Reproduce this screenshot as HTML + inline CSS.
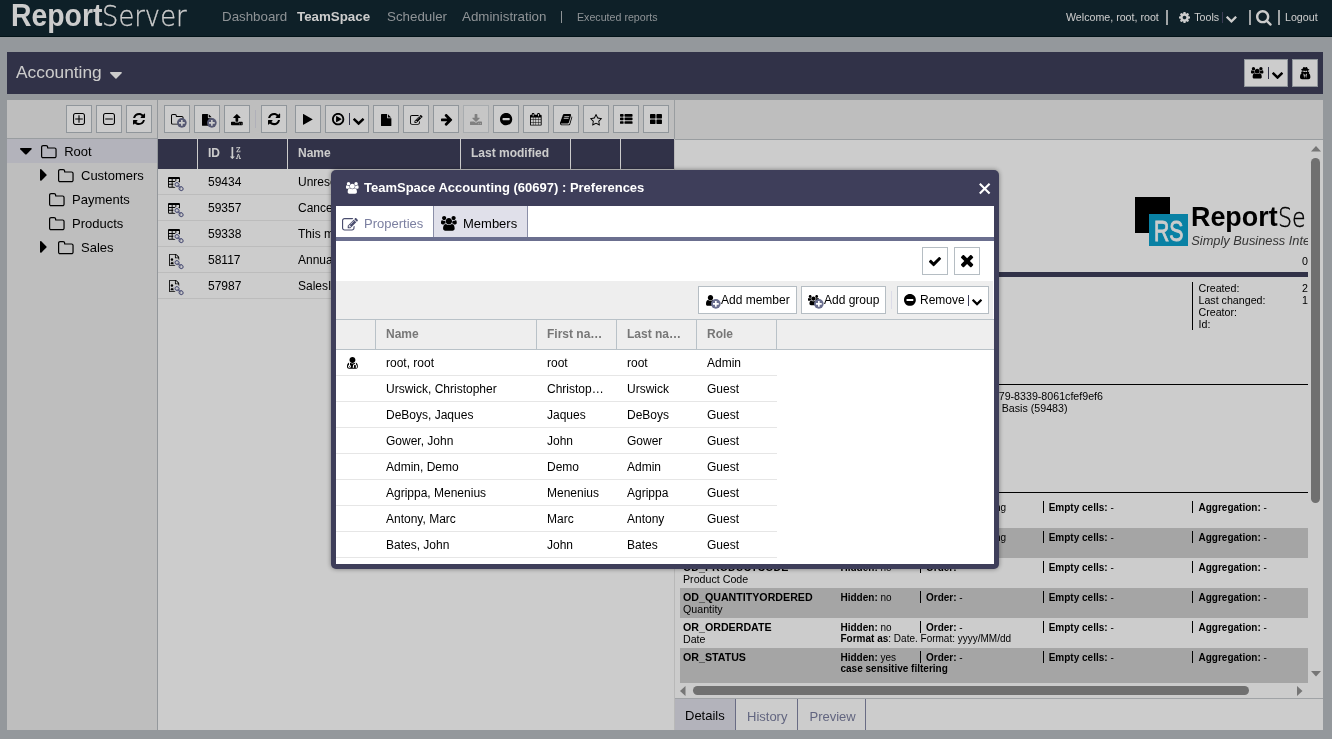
<!DOCTYPE html>
<html lang="en"><head><meta charset="utf-8"><title>ReportServer - TeamSpace</title>
<style>
html,body{margin:0;padding:0}
body{width:1332px;height:739px;overflow:hidden;position:relative;background:#babfc3;font-family:"Liberation Sans",Arial,Helvetica,sans-serif;color:#000}
.b,.t,.i,.c{position:absolute}
.t{white-space:nowrap;display:block}
.i{display:block;overflow:visible}
.c{overflow:hidden}
b,.bd{font-weight:bold}
</style></head><body>
<div id="app" style="position:absolute;left:0;top:0;width:1332px;height:739px;will-change:transform">
<div class="b" id="hdr" style="left:0;top:0;width:1332px;height:36px;background:#122832;border-bottom:1px solid #04181f"></div>
<span class="t" id="logo1" style="left:10.5px;top:-4.5px;font-size:31px;line-height:40px;font-weight:bold;color:#fff;transform-origin:0 50%;transform:scaleX(.915)">Report</span>
<span class="t" id="logo2" style="left:101.5px;top:-4.5px;font-size:29px;line-height:40px;font-weight:200;font-family:'DejaVu Sans Light','DejaVu Sans','Liberation Sans',sans-serif;color:#fff;-webkit-text-stroke:.3px #fff;transform-origin:0 50%;transform:scaleX(.89)">Server</span>
<span class="t " style="left:222.00px;top:6.50px;font-size:13.333px;line-height:20px;color:#b2b8bc">Dashboard</span>
<span class="t " style="left:297.00px;top:6.50px;font-size:13.333px;line-height:20px;color:#fff;font-weight:bold">TeamSpace</span>
<span class="t " style="left:387.00px;top:6.50px;font-size:13.333px;line-height:20px;color:#b2b8bc">Scheduler</span>
<span class="t " style="left:462.00px;top:6.50px;font-size:13.333px;line-height:20px;color:#b2b8bc">Administration</span>
<div class="b" style="left:561.00px;top:11.00px;width:1.00px;height:12.00px;background:#b2b8bc"></div>
<span class="t " style="left:577.00px;top:9.00px;font-size:10.667px;line-height:16px;color:#b2b8bc">Executed reports</span>
<span class="t " style="left:1066.00px;top:9.00px;font-size:10.667px;line-height:16px;color:#fff">Welcome, root, root</span>
<div class="b" style="left:1165.50px;top:10.00px;width:2.00px;height:14.50px;background:#c8cdd0"></div>
<div class="b" style="left:1249.00px;top:10.00px;width:2.00px;height:14.50px;background:#c8cdd0"></div>
<div class="b" style="left:1278.00px;top:10.00px;width:2.00px;height:14.50px;background:#c8cdd0"></div>
<svg class="i" style="left:1178.80px;top:12.00px;width:11.00px;height:11.00px;" viewBox="0 128 1536 1536"><path fill="#fff" stroke="#fff" stroke-width="0" d="M1024 896C1024 1037 909 1152 768 1152C627 1152 512 1037 512 896C512 755 627 640 768 640C909 640 1024 755 1024 896ZM1536 787C1536 770 1524 754 1507 751L1324 723C1314 690 1300 657 1283 625C1317 578 1354 534 1388 488C1393 481 1396 474 1396 465C1396 457 1394 449 1389 443C1347 384 1277 322 1224 273C1217 267 1208 263 1199 263C1190 263 1181 266 1175 272L1033 379C1004 364 974 352 943 342L915 158C913 141 897 128 879 128H657C639 128 625 140 621 156C605 216 599 281 592 342C561 352 530 365 501 380L363 273C355 267 346 263 337 263C303 263 168 409 144 442C139 449 135 456 135 465C135 474 139 482 145 489C182 534 218 579 252 627C236 657 223 687 213 719L27 747C12 750 0 768 0 783V1005C0 1022 12 1038 29 1041L212 1068C222 1102 236 1135 253 1167C219 1214 182 1258 148 1304C143 1311 140 1318 140 1327C140 1335 142 1343 147 1350C189 1408 259 1470 312 1518C319 1525 328 1529 337 1529C346 1529 355 1526 362 1520L503 1413C532 1428 562 1440 593 1450L621 1634C623 1651 639 1664 657 1664H879C897 1664 911 1652 915 1636C931 1576 937 1511 944 1450C975 1440 1006 1427 1035 1412L1173 1520C1181 1525 1190 1529 1199 1529C1233 1529 1368 1382 1392 1350C1398 1343 1401 1336 1401 1327C1401 1318 1397 1309 1391 1302C1354 1257 1318 1213 1284 1164C1300 1135 1312 1105 1323 1073L1508 1045C1524 1042 1536 1024 1536 1009Z"/></svg>
<span class="t " style="left:1194.30px;top:9.00px;font-size:10.667px;line-height:16px;color:#fff">Tools</span>
<div class="b" style="left:1222.00px;top:11.50px;width:1.00px;height:11.50px;background:#4a4a6a"></div>
<svg class="i" style="left:1226.06px;top:15.76px;width:10.87px;height:6.98px;" viewBox="90 533 1612 1034"><path fill="#fff" stroke="#fff" stroke-width="0" d="M1683 808C1708 783 1708 742 1683 717L1517 552C1492 527 1452 527 1427 552L896 1083L365 552C340 527 300 527 275 552L109 717C84 742 84 783 109 808L851 1549C876 1574 916 1574 941 1549L1683 808Z"/></svg>
<svg class="i" style="left:1256.10px;top:9.90px;width:15.80px;height:15.80px;" viewBox="0 128 1664 1664"><path fill="#fff" stroke="#fff" stroke-width="0" d="M1152 832C1152 1079 951 1280 704 1280C457 1280 256 1079 256 832C256 585 457 384 704 384C951 384 1152 585 1152 832ZM1664 1664C1664 1630 1650 1597 1627 1574L1284 1231C1365 1114 1408 974 1408 832C1408 443 1093 128 704 128C315 128 0 443 0 832C0 1221 315 1536 704 1536C846 1536 986 1493 1103 1412L1446 1754C1469 1778 1502 1792 1536 1792C1606 1792 1664 1734 1664 1664Z"/></svg>
<span class="t " style="left:1285.00px;top:9.00px;font-size:10.667px;line-height:16px;color:#fff">Logout</span>
<div class="b" style="left:7.00px;top:52.00px;width:1316.00px;height:42.00px;background:#3e3f5a"></div>
<span class="t " style="left:16.00px;top:59.00px;font-size:17.333px;line-height:26px;color:#fff">Accounting</span>
<svg class="i" style="left:109.90px;top:72.30px;width:11.91px;height:6.70px;" viewBox="0 640 1024 576"><path fill="#fff" stroke="#fff" stroke-width="0" d="M1024 704C1024 669 995 640 960 640H64C29 640 0 669 0 704C0 721 7 737 19 749L467 1197C479 1209 495 1216 512 1216C529 1216 545 1209 557 1197L1005 749C1017 737 1024 721 1024 704Z"/></svg>
<div class="b" style="left:1244.00px;top:59.00px;width:44.00px;height:28.00px;background:#fff;border:1px solid #b5bcc2;box-sizing:border-box"></div>
<div class="b" style="left:1292.00px;top:59.00px;width:26.00px;height:28.00px;background:#fff;border:1px solid #b5bcc2;box-sizing:border-box"></div>
<svg class="i" style="left:1251.04px;top:67.46px;width:12.41px;height:11.58px;" viewBox="0 0 1920 1792"><path fill="#000" stroke="#000" stroke-width="0" d="M593 896C541 821 512 731 512 640C512 618 514 596 517 574C474 589 430 597 384 597C249 597 145 512 124 512C-3 512 0 784 0 865C0 976 94 1024 194 1024H328C395 944 489 899 593 896ZM1664 1533C1664 1307 1611 960 1318 960C1284 960 1160 1099 960 1099C760 1099 636 960 602 960C309 960 256 1307 256 1533C256 1695 363 1792 523 1792H1397C1557 1792 1664 1695 1664 1533ZM640 256C640 115 525 0 384 0C243 0 128 115 128 256C128 397 243 512 384 512C525 512 640 397 640 256ZM1344 640C1344 428 1172 256 960 256C748 256 576 428 576 640C576 852 748 1024 960 1024C1172 1024 1344 852 1344 640ZM1920 865C1920 784 1923 512 1796 512C1775 512 1671 597 1536 597C1490 597 1446 589 1403 574C1406 596 1408 618 1408 640C1408 731 1379 821 1327 896C1431 899 1525 944 1592 1024H1726C1826 1024 1920 976 1920 865ZM1792 256C1792 115 1677 0 1536 0C1395 0 1280 115 1280 256C1280 397 1395 512 1536 512C1677 512 1792 397 1792 256Z"/></svg>
<div class="b" style="left:1268.00px;top:67.00px;width:1.00px;height:12.00px;background:#3e3f5a"></div>
<svg class="i" style="left:1271.86px;top:71.79px;width:11.09px;height:7.12px;" viewBox="90 533 1612 1034"><path fill="#000" stroke="#000" stroke-width="0" d="M1683 808C1708 783 1708 742 1683 717L1517 552C1492 527 1452 527 1427 552L896 1083L365 552C340 527 300 527 275 552L109 717C84 742 84 783 109 808L851 1549C876 1574 916 1574 941 1549L1683 808Z"/></svg>
<svg class="i" style="left:1299.92px;top:67.18px;width:10.36px;height:12.25px;" viewBox="0 0 1408 1664"><path fill="#000" stroke="#000" stroke-width="0" d="M576 1536 448 896 576 960 672 1088ZM832 1536 736 1088 832 960 960 896ZM992 526C991 535 990 544 988 553C982 561 977 558 973 570C947 641 935 696 845 696C716 696 752 577 710 577H698C656 577 692 696 563 696C473 696 461 641 435 570C431 558 426 561 420 553C418 544 417 535 416 526C417 524 418 522 420 520C429 513 501 512 516 512C573 512 627 520 683 531C690 533 697 533 704 533C711 533 718 533 725 531C781 520 835 512 892 512C907 512 979 513 988 520C990 522 991 524 992 526ZM1408 1405C1408 1227 1377 958 1198 865L1280 640H1066C1084 588 1091 534 1086 480C1125 472 1280 440 1280 384C1280 325 1110 293 1070 285C1049 210 999 96 948 37C928 14 903 0 872 0C812 0 764 62 704 62C644 62 596 0 536 0C505 0 480 14 460 37C409 96 359 210 338 285C298 293 128 325 128 384C128 440 283 472 322 480C321 490 320 501 320 512C320 556 328 599 342 640H128L218 860C32 950 0 1224 0 1405C0 1568 107 1664 267 1664H1141C1301 1664 1408 1568 1408 1405Z"/></svg>
<div class="b" style="left:7.00px;top:100.00px;width:1316.00px;height:39.00px;background:#eeeeee"></div>
<div class="b" style="left:7.00px;top:138.00px;width:150.00px;height:1.00px;background:#c0c5c9"></div>
<div class="b" style="left:675.00px;top:139.00px;width:648.00px;height:1.00px;background:#c0c5c9"></div>
<div class="b" style="left:158.00px;top:138.00px;width:516.00px;height:1.00px;background:#f6f6f6"></div>
<div class="b" style="left:157.00px;top:100.00px;width:1.00px;height:630.00px;background:#babfc3"></div>
<div class="b" style="left:674.00px;top:100.00px;width:1.00px;height:39.00px;background:#c0c5c9"></div>
<div class="b" style="left:66.00px;top:105.00px;width:26.00px;height:28.00px;background:#fff;border:1px solid #b5bcc2;box-sizing:border-box"></div>
<div class="b" style="left:96.00px;top:105.00px;width:26.00px;height:28.00px;background:#fff;border:1px solid #b5bcc2;box-sizing:border-box"></div>
<div class="b" style="left:126.00px;top:105.00px;width:26.00px;height:28.00px;background:#fff;border:1px solid #b5bcc2;box-sizing:border-box"></div>
<svg class="i" style="left:73.00px;top:113.00px;width:12.00px;height:12.00px;" viewBox="0 128 1408 1408"><path fill="#000" stroke="#000" stroke-width="0" d="M1152 800C1152 782 1138 768 1120 768H768V416C768 398 754 384 736 384H672C654 384 640 398 640 416V768H288C270 768 256 782 256 800V864C256 882 270 896 288 896H640V1248C640 1266 654 1280 672 1280H736C754 1280 768 1266 768 1248V896H1120C1138 896 1152 882 1152 864ZM1280 1248C1280 1336 1208 1408 1120 1408H288C200 1408 128 1336 128 1248V416C128 328 200 256 288 256H1120C1208 256 1280 328 1280 416V1248ZM1408 416C1408 257 1279 128 1120 128H288C129 128 0 257 0 416V1248C0 1407 129 1536 288 1536H1120C1279 1536 1408 1407 1408 1248Z"/></svg>
<svg class="i" style="left:102.90px;top:113.00px;width:12.00px;height:12.00px;" viewBox="0 128 1408 1408"><path fill="#000" stroke="#000" stroke-width="0" d="M1152 800C1152 782 1138 768 1120 768H288C270 768 256 782 256 800V864C256 882 270 896 288 896H1120C1138 896 1152 882 1152 864ZM1280 1248C1280 1336 1208 1408 1120 1408H288C200 1408 128 1336 128 1248V416C128 328 200 256 288 256H1120C1208 256 1280 328 1280 416V1248ZM1408 416C1408 257 1279 128 1120 128H288C129 128 0 257 0 416V1248C0 1407 129 1536 288 1536H1120C1279 1536 1408 1407 1408 1248Z"/></svg>
<svg class="i" style="left:133.03px;top:113.08px;width:12.05px;height:12.05px;" viewBox="0 128 1536 1536"><path fill="#000" stroke="#000" stroke-width="0" d="M1511 1056C1511 1039 1497 1024 1479 1024H1287C1272 1024 1262 1033 1257 1047C1240 1087 1228 1125 1204 1164C1111 1316 946 1408 768 1408C639 1408 514 1358 420 1270L557 1133C569 1121 576 1105 576 1088C576 1053 547 1024 512 1024H64C29 1024 0 1053 0 1088V1536C0 1571 29 1600 64 1600C81 1600 97 1593 109 1581L238 1452C380 1587 569 1664 764 1664C1133 1664 1425 1417 1510 1063C1511 1061 1511 1058 1511 1056ZM1536 256C1536 221 1507 192 1472 192C1455 192 1439 199 1427 211L1297 340C1155 206 964 128 768 128C399 128 104 374 18 729C18 731 18 734 18 736C18 753 32 768 50 768H249C264 768 274 759 279 745C296 705 308 667 332 628C425 476 590 384 768 384C897 384 1022 433 1117 521L979 659C967 671 960 687 960 704C960 739 989 768 1024 768H1472C1507 768 1536 739 1536 704Z"/></svg>
<div class="b" style="left:164.00px;top:105.00px;width:26.00px;height:28.00px;background:#fff;border:1px solid #b5bcc2;box-sizing:border-box"></div>
<div class="b" style="left:194.00px;top:105.00px;width:26.00px;height:28.00px;background:#fff;border:1px solid #b5bcc2;box-sizing:border-box"></div>
<div class="b" style="left:224.00px;top:105.00px;width:26.00px;height:28.00px;background:#fff;border:1px solid #b5bcc2;box-sizing:border-box"></div>
<div class="b" style="left:261.00px;top:105.00px;width:26.00px;height:28.00px;background:#fff;border:1px solid #b5bcc2;box-sizing:border-box"></div>
<div class="b" style="left:295.00px;top:105.00px;width:26.00px;height:28.00px;background:#fff;border:1px solid #b5bcc2;box-sizing:border-box"></div>
<div class="b" style="left:325.00px;top:105.00px;width:44.00px;height:28.00px;background:#fff;border:1px solid #b5bcc2;box-sizing:border-box"></div>
<div class="b" style="left:373.00px;top:105.00px;width:26.00px;height:28.00px;background:#fff;border:1px solid #b5bcc2;box-sizing:border-box"></div>
<div class="b" style="left:403.00px;top:105.00px;width:26.00px;height:28.00px;background:#fff;border:1px solid #b5bcc2;box-sizing:border-box"></div>
<div class="b" style="left:433.00px;top:105.00px;width:26.00px;height:28.00px;background:#fff;border:1px solid #b5bcc2;box-sizing:border-box"></div>
<div class="b" style="left:463.00px;top:105.00px;width:26.00px;height:28.00px;background:#f8f8f8;border:1px solid #d3d7db;box-sizing:border-box"></div>
<div class="b" style="left:493.00px;top:105.00px;width:26.00px;height:28.00px;background:#fff;border:1px solid #b5bcc2;box-sizing:border-box"></div>
<div class="b" style="left:523.00px;top:105.00px;width:26.00px;height:28.00px;background:#fff;border:1px solid #b5bcc2;box-sizing:border-box"></div>
<div class="b" style="left:553.00px;top:105.00px;width:26.00px;height:28.00px;background:#fff;border:1px solid #b5bcc2;box-sizing:border-box"></div>
<div class="b" style="left:583.00px;top:105.00px;width:26.00px;height:28.00px;background:#fff;border:1px solid #b5bcc2;box-sizing:border-box"></div>
<div class="b" style="left:613.00px;top:105.00px;width:26.00px;height:28.00px;background:#fff;border:1px solid #b5bcc2;box-sizing:border-box"></div>
<div class="b" style="left:643.00px;top:105.00px;width:26.00px;height:28.00px;background:#fff;border:1px solid #b5bcc2;box-sizing:border-box"></div>
<svg class="i" style="left:170.58px;top:114.19px;width:12.55px;height:10.62px;" viewBox="0 128 1664 1408"><path fill="#000" stroke="#000" stroke-width="0" d="M1536 1312C1536 1365 1493 1408 1440 1408H224C171 1408 128 1365 128 1312V352C128 299 171 256 224 256H544C597 256 640 299 640 352V416C640 469 683 512 736 512H1440C1493 512 1536 555 1536 608V1312ZM1664 608C1664 485 1563 384 1440 384H768V352C768 229 667 128 544 128H224C101 128 0 229 0 352V1312C0 1435 101 1536 224 1536H1440C1563 1536 1664 1435 1664 1312Z"/></svg>
<svg class="i" style="left:177.10px;top:117.90px;width:9.70px;height:9.70px" viewBox="0 0 20 20"><circle cx="10" cy="10" r="10" fill="#6b6f8f"/><path d="M8.3 4h3.4v4.3H16v3.4h-4.3V16H8.3v-4.3H4V8.3h4.3z" fill="#fff"/></svg>
<svg class="i" style="left:202.04px;top:113.65px;width:10.11px;height:11.80px;" viewBox="0 0 1536 1792"><path fill="#000" stroke="#000" stroke-width="0" d="M1024 512H1496C1487 498 1478 486 1468 476L1060 68C1050 58 1038 49 1024 40ZM896 544V0H96C43 0 0 43 0 96V1696C0 1749 43 1792 96 1792H1440C1493 1792 1536 1749 1536 1696V640H992C939 640 896 597 896 544Z"/></svg>
<svg class="i" style="left:207.10px;top:117.90px;width:9.70px;height:9.70px" viewBox="0 0 20 20"><circle cx="10" cy="10" r="10" fill="#6b6f8f"/><path d="M8.3 4h3.4v4.3H16v3.4h-4.3V16H8.3v-4.3H4V8.3h4.3z" fill="#fff"/></svg>
<svg class="i" style="left:231.24px;top:113.96px;width:11.72px;height:11.27px;" viewBox="0 64 1664 1600"><path fill="#000" stroke="#000" stroke-width="0" d="M1280 1472C1280 1507 1251 1536 1216 1536C1181 1536 1152 1507 1152 1472C1152 1437 1181 1408 1216 1408C1251 1408 1280 1437 1280 1472ZM1536 1472C1536 1507 1507 1536 1472 1536C1437 1536 1408 1507 1408 1472C1408 1437 1437 1408 1472 1408C1507 1408 1536 1437 1536 1472ZM1664 1248C1664 1195 1621 1152 1568 1152H1141C1114 1226 1043 1280 960 1280H704C621 1280 550 1226 523 1152H96C43 1152 0 1195 0 1248V1568C0 1621 43 1664 96 1664H1568C1621 1664 1664 1621 1664 1568ZM1339 600C1349 577 1344 549 1325 531L877 83C865 70 848 64 832 64C816 64 799 70 787 83L339 531C320 549 315 577 325 600C335 624 358 640 384 640H640V1088C640 1123 669 1152 704 1152H960C995 1152 1024 1123 1024 1088V640H1280C1306 640 1329 624 1339 600Z"/></svg>
<div class="b" style="left:255.00px;top:110.00px;width:1.00px;height:18.00px;background:#dcdce8"></div>
<svg class="i" style="left:267.93px;top:113.27px;width:12.15px;height:12.15px;" viewBox="0 128 1536 1536"><path fill="#000" stroke="#000" stroke-width="0" d="M1511 1056C1511 1039 1497 1024 1479 1024H1287C1272 1024 1262 1033 1257 1047C1240 1087 1228 1125 1204 1164C1111 1316 946 1408 768 1408C639 1408 514 1358 420 1270L557 1133C569 1121 576 1105 576 1088C576 1053 547 1024 512 1024H64C29 1024 0 1053 0 1088V1536C0 1571 29 1600 64 1600C81 1600 97 1593 109 1581L238 1452C380 1587 569 1664 764 1664C1133 1664 1425 1417 1510 1063C1511 1061 1511 1058 1511 1056ZM1536 256C1536 221 1507 192 1472 192C1455 192 1439 199 1427 211L1297 340C1155 206 964 128 768 128C399 128 104 374 18 729C18 731 18 734 18 736C18 753 32 768 50 768H249C264 768 274 759 279 745C296 705 308 667 332 628C425 476 590 384 768 384C897 384 1022 433 1117 521L979 659C967 671 960 687 960 704C960 739 989 768 1024 768H1472C1507 768 1536 739 1536 704Z"/></svg>
<svg class="i" style="left:303.22px;top:114.07px;width:9.76px;height:10.76px;" viewBox="0 120 1407 1552"><path fill="#000" stroke="#000" stroke-width="0" d="M1384 927C1415 910 1415 882 1384 865L56 127C25 110 0 125 0 160V1632C0 1667 25 1682 56 1665Z"/></svg>
<svg class="i" style="left:331.83px;top:113.28px;width:12.25px;height:12.25px;" viewBox="0 128 1536 1536"><path fill="#000" stroke="#000" stroke-width="0" d="M1184 896C1184 873 1172 852 1152 841L608 521C589 509 564 509 544 520C524 532 512 553 512 576V1216C512 1239 524 1260 544 1272C554 1277 565 1280 576 1280C587 1280 598 1277 608 1271L1152 951C1172 940 1184 919 1184 896ZM1312 896C1312 1196 1068 1440 768 1440C468 1440 224 1196 224 896C224 596 468 352 768 352C1068 352 1312 596 1312 896ZM1536 896C1536 472 1192 128 768 128C344 128 0 472 0 896C0 1320 344 1664 768 1664C1192 1664 1536 1320 1536 896Z"/></svg>
<div class="b" style="left:349.00px;top:113.00px;width:1.00px;height:12.00px;background:#3e3f5a"></div>
<svg class="i" style="left:352.93px;top:117.74px;width:11.24px;height:7.21px;" viewBox="90 533 1612 1034"><path fill="#000" stroke="#000" stroke-width="0" d="M1683 808C1708 783 1708 742 1683 717L1517 552C1492 527 1452 527 1427 552L896 1083L365 552C340 527 300 527 275 552L109 717C84 742 84 783 109 808L851 1549C876 1574 916 1574 941 1549L1683 808Z"/></svg>
<svg class="i" style="left:380.95px;top:113.64px;width:10.39px;height:12.12px;" viewBox="0 0 1536 1792"><path fill="#000" stroke="#000" stroke-width="0" d="M1024 512H1496C1487 498 1478 486 1468 476L1060 68C1050 58 1038 49 1024 40ZM896 544V0H96C43 0 0 43 0 96V1696C0 1749 43 1792 96 1792H1440C1493 1792 1536 1749 1536 1696V640H992C939 640 896 597 896 544Z"/></svg>
<svg class="i" style="left:409.89px;top:115.16px;width:12.51px;height:9.88px;" viewBox="0 128 1784 1408"><path fill="#000" stroke="#000" stroke-width="0" d="M888 1184H832V1088H736V1032L852 916L1004 1068ZM1328 464C1337 473 1336 488 1327 497L977 847C968 856 953 857 944 848C935 839 936 824 945 815L1295 465C1304 456 1319 455 1328 464ZM1408 1058C1408 1045 1400 1034 1388 1029C1376 1024 1363 1026 1353 1036L1289 1100C1283 1106 1280 1114 1280 1122V1248C1280 1336 1208 1408 1120 1408H288C200 1408 128 1336 128 1248V416C128 328 200 256 288 256H1120C1135 256 1150 258 1165 262C1176 266 1188 263 1197 254L1246 205C1254 197 1257 187 1255 176C1253 166 1246 157 1237 153C1200 136 1160 128 1120 128H288C129 128 0 257 0 416V1248C0 1407 129 1536 288 1536H1120C1279 1536 1408 1407 1408 1248ZM1312 320 640 992V1280H928L1600 608ZM1756 452C1793 415 1793 353 1756 316L1604 164C1567 127 1505 127 1468 164L1376 256L1664 544L1756 452Z"/></svg>
<svg class="i" style="left:440.81px;top:113.69px;width:11.17px;height:11.83px;" viewBox="0 181 1472 1558"><path fill="#000" stroke="#000" stroke-width="0" d="M1472 960C1472 926 1459 893 1435 870L784 219C760 195 727 181 693 181C659 181 627 195 603 219L528 294C504 317 490 350 490 384C490 418 504 451 528 474L821 768H117C45 768 0 828 0 896V1024C0 1092 45 1152 117 1152H821L528 1445C504 1469 490 1502 490 1536C490 1570 504 1603 528 1627L603 1702C627 1725 659 1739 693 1739C727 1739 760 1725 784 1702L1435 1051C1459 1027 1472 994 1472 960Z"/></svg>
<svg class="i" style="left:470.05px;top:113.96px;width:12.01px;height:11.08px;" viewBox="0 0 1664 1536"><path fill="#a0a0a0" stroke="#a0a0a0" stroke-width="0" d="M1280 1344C1280 1379 1251 1408 1216 1408C1181 1408 1152 1379 1152 1344C1152 1309 1181 1280 1216 1280C1251 1280 1280 1309 1280 1344ZM1536 1344C1536 1379 1507 1408 1472 1408C1437 1408 1408 1379 1408 1344C1408 1309 1437 1280 1472 1280C1507 1280 1536 1309 1536 1344ZM1664 1120C1664 1067 1621 1024 1568 1024H1104L968 1160C931 1196 883 1216 832 1216C781 1216 733 1196 696 1160L561 1024H96C43 1024 0 1067 0 1120V1440C0 1493 43 1536 96 1536H1568C1621 1536 1664 1493 1664 1440ZM1339 551C1329 528 1306 512 1280 512H1024V64C1024 29 995 0 960 0H704C669 0 640 29 640 64V512H384C358 512 335 528 325 551C315 575 320 603 339 621L787 1069C799 1082 816 1088 832 1088C848 1088 865 1082 877 1069L1325 621C1344 603 1349 575 1339 551Z"/></svg>
<svg class="i" style="left:499.88px;top:113.02px;width:12.25px;height:12.25px;" viewBox="0 128 1536 1536"><path fill="#000" stroke="#000" stroke-width="0" d="M1216 960C1216 995 1187 1024 1152 1024H384C349 1024 320 995 320 960V832C320 797 349 768 384 768H1152C1187 768 1216 797 1216 832V960ZM1536 896C1536 472 1192 128 768 128C344 128 0 472 0 896C0 1320 344 1664 768 1664C1192 1664 1536 1320 1536 896Z"/></svg>
<svg class="i" style="left:530.17px;top:112.72px;width:11.66px;height:12.55px;" viewBox="0 0 1664 1792"><path fill="#000" stroke="#000" stroke-width="0" d="M128 1664V1376H416V1664ZM480 1664V1376H800V1664ZM128 1312V992H416V1312ZM480 1312V992H800V1312ZM128 928V640H416V928ZM864 1664V1376H1184V1664ZM480 928V640H800V928ZM1248 1664V1376H1536V1664ZM864 1312V992H1184V1312ZM512 448C512 465 497 480 480 480H416C399 480 384 465 384 448V160C384 143 399 128 416 128H480C497 128 512 143 512 160V448ZM1248 1312V992H1536V1312ZM864 928V640H1184V928ZM1248 928V640H1536V928ZM1280 448C1280 465 1265 480 1248 480H1184C1167 480 1152 465 1152 448V160C1152 143 1167 128 1184 128H1248C1265 128 1280 143 1280 160V448ZM1664 384C1664 314 1606 256 1536 256H1408V160C1408 72 1336 0 1248 0H1184C1096 0 1024 72 1024 160V256H640V160C640 72 568 0 480 0H416C328 0 256 72 256 160V256H128C58 256 0 314 0 384V1664C0 1734 58 1792 128 1792H1536C1606 1792 1664 1734 1664 1664Z"/></svg>
<svg class="i" style="left:559.91px;top:113.78px;width:12.28px;height:11.33px;" viewBox="0 128 1664 1536"><path fill="#000" stroke="#000" stroke-width="0" d="M1639 478C1624 458 1603 444 1580 435C1581 453 1581 473 1575 492L1275 1479C1264 1515 1221 1536 1184 1536H261C206 1536 137 1524 117 1466C109 1444 110 1435 118 1423C127 1411 143 1408 156 1408H1025C1152 1408 1178 1374 1225 1220L1499 314C1513 267 1507 220 1481 184C1456 149 1414 128 1367 128H606C589 128 572 133 555 137L556 134C429 98 421 235 379 297C363 320 339 340 335 359C332 377 342 394 340 411C334 464 294 559 270 592C255 612 233 622 226 645C220 661 230 684 228 705C223 752 188 841 161 887C151 905 132 919 127 938C122 955 132 977 127 996C116 1048 82 1129 52 1179C36 1206 15 1223 11 1247C9 1259 18 1272 17 1288C16 1312 12 1332 10 1352C-4 1390 -4 1434 12 1479C49 1583 158 1664 260 1664H1183C1269 1664 1357 1598 1382 1513L1657 607C1671 561 1664 514 1639 478ZM575 480 596 416C602 398 621 384 638 384H1246C1264 384 1274 398 1268 416L1247 480C1241 498 1222 512 1205 512H597C579 512 569 498 575 480ZM492 736 513 672C519 654 538 640 555 640H1163C1181 640 1191 654 1185 672L1164 736C1158 754 1139 768 1122 768H514C496 768 486 754 492 736Z"/></svg>
<svg class="i" style="left:590.01px;top:113.69px;width:12.08px;height:11.52px;" viewBox="0 32 1664 1587"><path fill="#000" stroke="#000" stroke-width="0" d="M1137 1004 1209 1425 832 1226 454 1425 527 1004 221 707 643 645 832 263 1021 645 1443 707ZM1664 647C1664 617 1632 605 1608 601L1106 528L881 73C872 54 855 32 832 32C809 32 792 54 783 73L558 528L56 601C31 605 0 617 0 647C0 665 13 682 25 695L389 1049L303 1549C302 1556 301 1562 301 1569C301 1595 314 1619 343 1619C357 1619 370 1614 383 1607L832 1371L1281 1607C1293 1614 1307 1619 1321 1619C1350 1619 1362 1596 1362 1569C1362 1562 1362 1556 1361 1549L1275 1049L1638 695C1651 682 1664 665 1664 647Z"/></svg>
<svg class="i" style="left:619.72px;top:114.46px;width:12.56px;height:9.87px;" viewBox="0 128 1792 1408"><path fill="#000" stroke="#000" stroke-width="0" d="M512 1248C512 1195 469 1152 416 1152H96C43 1152 0 1195 0 1248V1440C0 1493 43 1536 96 1536H416C469 1536 512 1493 512 1440ZM512 736C512 683 469 640 416 640H96C43 640 0 683 0 736V928C0 981 43 1024 96 1024H416C469 1024 512 981 512 928ZM1792 1248C1792 1195 1749 1152 1696 1152H736C683 1152 640 1195 640 1248V1440C640 1493 683 1536 736 1536H1696C1749 1536 1792 1493 1792 1440ZM512 224C512 171 469 128 416 128H96C43 128 0 171 0 224V416C0 469 43 512 96 512H416C469 512 512 469 512 416ZM1792 736C1792 683 1749 640 1696 640H736C683 640 640 683 640 736V928C640 981 683 1024 736 1024H1696C1749 1024 1792 981 1792 928ZM1792 224C1792 171 1749 128 1696 128H736C683 128 640 171 640 224V416C640 469 683 512 736 512H1696C1749 512 1792 469 1792 416Z"/></svg>
<svg class="i" style="left:649.97px;top:114.34px;width:11.96px;height:10.12px;" viewBox="0 128 1664 1408"><path fill="#000" stroke="#000" stroke-width="0" d="M768 1024C768 954 710 896 640 896H128C58 896 0 954 0 1024V1408C0 1478 58 1536 128 1536H640C710 1536 768 1478 768 1408ZM768 256C768 186 710 128 640 128H128C58 128 0 186 0 256V640C0 710 58 768 128 768H640C710 768 768 710 768 640ZM1664 1024C1664 954 1606 896 1536 896H1024C954 896 896 954 896 1024V1408C896 1478 954 1536 1024 1536H1536C1606 1536 1664 1478 1664 1408ZM1664 256C1664 186 1606 128 1536 128H1024C954 128 896 186 896 256V640C896 710 954 768 1024 768H1536C1606 768 1664 710 1664 640Z"/></svg>
<div class="b" style="left:7.00px;top:139.00px;width:150.00px;height:591.00px;background:#eeeeee"></div>
<div class="b" style="left:7.00px;top:139.00px;width:150.00px;height:24.00px;background:#e0e0ea"></div>
<svg class="i" style="left:20.12px;top:148.19px;width:11.77px;height:6.62px;" viewBox="0 640 1024 576"><path fill="#000" stroke="#000" stroke-width="0" d="M1024 704C1024 669 995 640 960 640H64C29 640 0 669 0 704C0 721 7 737 19 749L467 1197C479 1209 495 1216 512 1216C529 1216 545 1209 557 1197L1005 749C1017 737 1024 721 1024 704Z"/></svg>
<svg class="i" style="left:40.82px;top:144.93px;width:15.65px;height:13.25px;" viewBox="0 128 1664 1408"><path fill="#000" stroke="#000" stroke-width="0" d="M1536 1312C1536 1365 1493 1408 1440 1408H224C171 1408 128 1365 128 1312V352C128 299 171 256 224 256H544C597 256 640 299 640 352V416C640 469 683 512 736 512H1440C1493 512 1536 555 1536 608V1312ZM1664 608C1664 485 1563 384 1440 384H768V352C768 229 667 128 544 128H224C101 128 0 229 0 352V1312C0 1435 101 1536 224 1536H1440C1563 1536 1664 1435 1664 1312Z"/></svg>
<span class="t " style="left:64.20px;top:141.60px;font-size:13.000px;line-height:20px;">Root</span>
<svg class="i" style="left:40.26px;top:169.41px;width:6.68px;height:11.87px;" viewBox="0 384 576 1024"><path fill="#000" stroke="#000" stroke-width="0" d="M576 896C576 879 569 863 557 851L109 403C97 391 81 384 64 384C29 384 0 413 0 448V1344C0 1379 29 1408 64 1408C81 1408 97 1401 109 1389L557 941C569 929 576 913 576 896Z"/></svg>
<svg class="i" style="left:58.02px;top:168.93px;width:15.65px;height:13.25px;" viewBox="0 128 1664 1408"><path fill="#000" stroke="#000" stroke-width="0" d="M1536 1312C1536 1365 1493 1408 1440 1408H224C171 1408 128 1365 128 1312V352C128 299 171 256 224 256H544C597 256 640 299 640 352V416C640 469 683 512 736 512H1440C1493 512 1536 555 1536 608V1312ZM1664 608C1664 485 1563 384 1440 384H768V352C768 229 667 128 544 128H224C101 128 0 229 0 352V1312C0 1435 101 1536 224 1536H1440C1563 1536 1664 1435 1664 1312Z"/></svg>
<span class="t " style="left:81.00px;top:165.60px;font-size:13.000px;line-height:20px;">Customers</span>
<svg class="i" style="left:49.22px;top:192.93px;width:15.65px;height:13.25px;" viewBox="0 128 1664 1408"><path fill="#000" stroke="#000" stroke-width="0" d="M1536 1312C1536 1365 1493 1408 1440 1408H224C171 1408 128 1365 128 1312V352C128 299 171 256 224 256H544C597 256 640 299 640 352V416C640 469 683 512 736 512H1440C1493 512 1536 555 1536 608V1312ZM1664 608C1664 485 1563 384 1440 384H768V352C768 229 667 128 544 128H224C101 128 0 229 0 352V1312C0 1435 101 1536 224 1536H1440C1563 1536 1664 1435 1664 1312Z"/></svg>
<span class="t " style="left:72.00px;top:189.60px;font-size:13.000px;line-height:20px;">Payments</span>
<svg class="i" style="left:49.22px;top:216.93px;width:15.65px;height:13.25px;" viewBox="0 128 1664 1408"><path fill="#000" stroke="#000" stroke-width="0" d="M1536 1312C1536 1365 1493 1408 1440 1408H224C171 1408 128 1365 128 1312V352C128 299 171 256 224 256H544C597 256 640 299 640 352V416C640 469 683 512 736 512H1440C1493 512 1536 555 1536 608V1312ZM1664 608C1664 485 1563 384 1440 384H768V352C768 229 667 128 544 128H224C101 128 0 229 0 352V1312C0 1435 101 1536 224 1536H1440C1563 1536 1664 1435 1664 1312Z"/></svg>
<span class="t " style="left:72.00px;top:213.60px;font-size:13.000px;line-height:20px;">Products</span>
<svg class="i" style="left:40.26px;top:241.41px;width:6.68px;height:11.87px;" viewBox="0 384 576 1024"><path fill="#000" stroke="#000" stroke-width="0" d="M576 896C576 879 569 863 557 851L109 403C97 391 81 384 64 384C29 384 0 413 0 448V1344C0 1379 29 1408 64 1408C81 1408 97 1401 109 1389L557 941C569 929 576 913 576 896Z"/></svg>
<svg class="i" style="left:58.02px;top:240.93px;width:15.65px;height:13.25px;" viewBox="0 128 1664 1408"><path fill="#000" stroke="#000" stroke-width="0" d="M1536 1312C1536 1365 1493 1408 1440 1408H224C171 1408 128 1365 128 1312V352C128 299 171 256 224 256H544C597 256 640 299 640 352V416C640 469 683 512 736 512H1440C1493 512 1536 555 1536 608V1312ZM1664 608C1664 485 1563 384 1440 384H768V352C768 229 667 128 544 128H224C101 128 0 229 0 352V1312C0 1435 101 1536 224 1536H1440C1563 1536 1664 1435 1664 1312Z"/></svg>
<span class="t " style="left:81.00px;top:237.60px;font-size:13.000px;line-height:20px;">Sales</span>
<div class="b" style="left:158.00px;top:139.00px;width:516.00px;height:591.00px;background:#fff"></div>
<div class="b" style="left:158.00px;top:139.00px;width:516.00px;height:30.00px;background:#3e3f5a"></div>
<div class="b" style="left:197.00px;top:139.00px;width:1.00px;height:30.00px;background:#fff"></div>
<div class="b" style="left:287.00px;top:139.00px;width:1.00px;height:30.00px;background:#fff"></div>
<div class="b" style="left:460.00px;top:139.00px;width:1.00px;height:30.00px;background:#fff"></div>
<div class="b" style="left:570.00px;top:139.00px;width:1.00px;height:30.00px;background:#fff"></div>
<div class="b" style="left:620.00px;top:139.00px;width:1.00px;height:30.00px;background:#fff"></div>
<span class="t " style="left:208.00px;top:144.10px;font-size:12.000px;line-height:18px;color:#fff;font-weight:bold">ID</span>
<svg class="i" style="left:230.42px;top:147.28px;width:10.96px;height:12.05px;" viewBox="32 0 1629 1792"><path fill="#fff" stroke="#fff" stroke-width="0" d="M1191 1432 1264 1214C1271 1194 1272 1179 1275 1167L1278 1147H1282C1282 1153 1283 1159 1284 1167L1296 1214L1368 1432ZM736 1440C736 1422 722 1408 704 1408H512V32C512 14 498 0 480 0H288C270 0 256 14 256 32V1408H64C51 1408 39 1416 34 1428C29 1440 32 1453 41 1463L361 1783C368 1789 376 1792 384 1792C392 1792 400 1789 407 1783L726 1464C732 1457 736 1449 736 1440ZM1661 1686H1591L1361 1024H1199L969 1686H899V1792H1186V1686H1111L1158 1542H1401L1448 1686H1373V1792H1661ZM1572 535H1451V654H1203C1191 654 1182 654 1173 655L1159 658V655L1170 645C1177 637 1185 628 1191 619L1560 89V0H993V229H1113V114H1345C1357 114 1367 113 1375 111C1381 111 1385 110 1389 110V113L1378 122C1373 127 1365 137 1357 149L988 678V768H1572Z"/></svg>
<span class="t " style="left:298.00px;top:144.10px;font-size:12.000px;line-height:18px;color:#fff;font-weight:bold">Name</span>
<span class="t " style="left:471.00px;top:144.10px;font-size:12.000px;line-height:18px;color:#fff;font-weight:bold">Last modified</span>
<div class="b" style="left:158.00px;top:194.00px;width:516.00px;height:1.00px;background:#ebebeb"></div>
<span class="t " style="left:208.00px;top:173.00px;font-size:12.000px;line-height:18px;">59434</span>
<span class="t " style="left:298.00px;top:173.00px;font-size:12.000px;line-height:18px;">Unresolved orders</span>
<svg class="i" style="left:167.90px;top:177.10px;width:12.00px;height:10.80px;" viewBox="0 128 1664 1408" preserveAspectRatio="none"><path fill="#000" stroke="#000" stroke-width="0" d="M512 1376C512 1394 498 1408 480 1408H160C142 1408 128 1394 128 1376V1184C128 1166 142 1152 160 1152H480C498 1152 512 1166 512 1184V1376ZM512 992C512 1010 498 1024 480 1024H160C142 1024 128 1010 128 992V800C128 782 142 768 160 768H480C498 768 512 782 512 800V992ZM1024 1376C1024 1394 1010 1408 992 1408H672C654 1408 640 1394 640 1376V1184C640 1166 654 1152 672 1152H992C1010 1152 1024 1166 1024 1184V1376ZM512 608C512 626 498 640 480 640H160C142 640 128 626 128 608V416C128 398 142 384 160 384H480C498 384 512 398 512 416V608ZM1024 992C1024 1010 1010 1024 992 1024H672C654 1024 640 1010 640 992V800C640 782 654 768 672 768H992C1010 768 1024 782 1024 800V992ZM1536 1376C1536 1394 1522 1408 1504 1408H1184C1166 1408 1152 1394 1152 1376V1184C1152 1166 1166 1152 1184 1152H1504C1522 1152 1536 1166 1536 1184V1376ZM1024 608C1024 626 1010 640 992 640H672C654 640 640 626 640 608V416C640 398 654 384 672 384H992C1010 384 1024 398 1024 416V608ZM1536 992C1536 1010 1522 1024 1504 1024H1184C1166 1024 1152 1010 1152 992V800C1152 782 1166 768 1184 768H1504C1522 768 1536 782 1536 800V992ZM1536 608C1536 626 1522 640 1504 640H1184C1166 640 1152 626 1152 608V416C1152 398 1166 384 1184 384H1504C1522 384 1536 398 1536 416V608ZM1664 288C1664 200 1592 128 1504 128H160C72 128 0 200 0 288V1376C0 1464 72 1536 160 1536H1504C1592 1536 1664 1464 1664 1376Z"/></svg>
<svg class="i" style="left:174.00px;top:181.60px;width:10.20px;height:9.30px" viewBox="16 16 1632 1632"><g><path fill="#fff" stroke="#fff" stroke-width="420" stroke-linejoin="round" d="M1456 1216C1456 1241 1446 1265 1428 1283L1281 1429C1263 1446 1238 1455 1213 1455C1188 1455 1163 1446 1145 1428L939 1221C921 1203 911 1178 911 1153C911 1123 923 1100 944 1080C977 1113 1005 1152 1056 1152C1109 1152 1152 1109 1152 1056C1152 1005 1113 977 1080 944C1100 923 1123 912 1152 912C1177 912 1202 922 1220 940L1428 1148C1446 1166 1456 1190 1456 1216ZM753 511C753 541 741 564 720 584C687 551 659 512 608 512C555 512 512 555 512 608C512 659 551 687 584 720C564 741 541 751 512 751C487 751 462 742 444 724L236 516C218 498 208 474 208 448C208 423 218 399 236 381L383 235C401 218 426 208 451 208C476 208 501 218 519 236L725 443C743 461 753 486 753 511ZM1648 1216C1648 1139 1619 1067 1564 1012L1356 804C1302 750 1228 720 1152 720C1073 720 999 752 944 808L856 720C912 665 944 590 944 511C944 435 915 362 861 308L655 101C601 46 528 16 451 16C375 16 302 45 248 99L101 245C47 298 16 372 16 448C16 525 45 597 100 652L308 860C362 914 436 944 512 944C591 944 665 912 720 856L808 944C752 999 720 1074 720 1153C720 1229 749 1302 803 1356L1009 1563C1063 1618 1136 1648 1213 1648C1289 1648 1362 1619 1416 1565L1563 1419C1617 1366 1648 1292 1648 1216Z"/><path fill="#6b6f9b" d="M1456 1216C1456 1241 1446 1265 1428 1283L1281 1429C1263 1446 1238 1455 1213 1455C1188 1455 1163 1446 1145 1428L939 1221C921 1203 911 1178 911 1153C911 1123 923 1100 944 1080C977 1113 1005 1152 1056 1152C1109 1152 1152 1109 1152 1056C1152 1005 1113 977 1080 944C1100 923 1123 912 1152 912C1177 912 1202 922 1220 940L1428 1148C1446 1166 1456 1190 1456 1216ZM753 511C753 541 741 564 720 584C687 551 659 512 608 512C555 512 512 555 512 608C512 659 551 687 584 720C564 741 541 751 512 751C487 751 462 742 444 724L236 516C218 498 208 474 208 448C208 423 218 399 236 381L383 235C401 218 426 208 451 208C476 208 501 218 519 236L725 443C743 461 753 486 753 511ZM1648 1216C1648 1139 1619 1067 1564 1012L1356 804C1302 750 1228 720 1152 720C1073 720 999 752 944 808L856 720C912 665 944 590 944 511C944 435 915 362 861 308L655 101C601 46 528 16 451 16C375 16 302 45 248 99L101 245C47 298 16 372 16 448C16 525 45 597 100 652L308 860C362 914 436 944 512 944C591 944 665 912 720 856L808 944C752 999 720 1074 720 1153C720 1229 749 1302 803 1356L1009 1563C1063 1618 1136 1648 1213 1648C1289 1648 1362 1619 1416 1565L1563 1419C1617 1366 1648 1292 1648 1216Z"/></g></svg>
<div class="b" style="left:158.00px;top:220.00px;width:516.00px;height:1.00px;background:#ebebeb"></div>
<span class="t " style="left:208.00px;top:199.00px;font-size:12.000px;line-height:18px;">59357</span>
<span class="t " style="left:298.00px;top:199.00px;font-size:12.000px;line-height:18px;">Cancelled orders</span>
<svg class="i" style="left:167.90px;top:203.10px;width:12.00px;height:10.80px;" viewBox="0 128 1664 1408" preserveAspectRatio="none"><path fill="#000" stroke="#000" stroke-width="0" d="M512 1376C512 1394 498 1408 480 1408H160C142 1408 128 1394 128 1376V1184C128 1166 142 1152 160 1152H480C498 1152 512 1166 512 1184V1376ZM512 992C512 1010 498 1024 480 1024H160C142 1024 128 1010 128 992V800C128 782 142 768 160 768H480C498 768 512 782 512 800V992ZM1024 1376C1024 1394 1010 1408 992 1408H672C654 1408 640 1394 640 1376V1184C640 1166 654 1152 672 1152H992C1010 1152 1024 1166 1024 1184V1376ZM512 608C512 626 498 640 480 640H160C142 640 128 626 128 608V416C128 398 142 384 160 384H480C498 384 512 398 512 416V608ZM1024 992C1024 1010 1010 1024 992 1024H672C654 1024 640 1010 640 992V800C640 782 654 768 672 768H992C1010 768 1024 782 1024 800V992ZM1536 1376C1536 1394 1522 1408 1504 1408H1184C1166 1408 1152 1394 1152 1376V1184C1152 1166 1166 1152 1184 1152H1504C1522 1152 1536 1166 1536 1184V1376ZM1024 608C1024 626 1010 640 992 640H672C654 640 640 626 640 608V416C640 398 654 384 672 384H992C1010 384 1024 398 1024 416V608ZM1536 992C1536 1010 1522 1024 1504 1024H1184C1166 1024 1152 1010 1152 992V800C1152 782 1166 768 1184 768H1504C1522 768 1536 782 1536 800V992ZM1536 608C1536 626 1522 640 1504 640H1184C1166 640 1152 626 1152 608V416C1152 398 1166 384 1184 384H1504C1522 384 1536 398 1536 416V608ZM1664 288C1664 200 1592 128 1504 128H160C72 128 0 200 0 288V1376C0 1464 72 1536 160 1536H1504C1592 1536 1664 1464 1664 1376Z"/></svg>
<svg class="i" style="left:174.00px;top:207.60px;width:10.20px;height:9.30px" viewBox="16 16 1632 1632"><g><path fill="#fff" stroke="#fff" stroke-width="420" stroke-linejoin="round" d="M1456 1216C1456 1241 1446 1265 1428 1283L1281 1429C1263 1446 1238 1455 1213 1455C1188 1455 1163 1446 1145 1428L939 1221C921 1203 911 1178 911 1153C911 1123 923 1100 944 1080C977 1113 1005 1152 1056 1152C1109 1152 1152 1109 1152 1056C1152 1005 1113 977 1080 944C1100 923 1123 912 1152 912C1177 912 1202 922 1220 940L1428 1148C1446 1166 1456 1190 1456 1216ZM753 511C753 541 741 564 720 584C687 551 659 512 608 512C555 512 512 555 512 608C512 659 551 687 584 720C564 741 541 751 512 751C487 751 462 742 444 724L236 516C218 498 208 474 208 448C208 423 218 399 236 381L383 235C401 218 426 208 451 208C476 208 501 218 519 236L725 443C743 461 753 486 753 511ZM1648 1216C1648 1139 1619 1067 1564 1012L1356 804C1302 750 1228 720 1152 720C1073 720 999 752 944 808L856 720C912 665 944 590 944 511C944 435 915 362 861 308L655 101C601 46 528 16 451 16C375 16 302 45 248 99L101 245C47 298 16 372 16 448C16 525 45 597 100 652L308 860C362 914 436 944 512 944C591 944 665 912 720 856L808 944C752 999 720 1074 720 1153C720 1229 749 1302 803 1356L1009 1563C1063 1618 1136 1648 1213 1648C1289 1648 1362 1619 1416 1565L1563 1419C1617 1366 1648 1292 1648 1216Z"/><path fill="#6b6f9b" d="M1456 1216C1456 1241 1446 1265 1428 1283L1281 1429C1263 1446 1238 1455 1213 1455C1188 1455 1163 1446 1145 1428L939 1221C921 1203 911 1178 911 1153C911 1123 923 1100 944 1080C977 1113 1005 1152 1056 1152C1109 1152 1152 1109 1152 1056C1152 1005 1113 977 1080 944C1100 923 1123 912 1152 912C1177 912 1202 922 1220 940L1428 1148C1446 1166 1456 1190 1456 1216ZM753 511C753 541 741 564 720 584C687 551 659 512 608 512C555 512 512 555 512 608C512 659 551 687 584 720C564 741 541 751 512 751C487 751 462 742 444 724L236 516C218 498 208 474 208 448C208 423 218 399 236 381L383 235C401 218 426 208 451 208C476 208 501 218 519 236L725 443C743 461 753 486 753 511ZM1648 1216C1648 1139 1619 1067 1564 1012L1356 804C1302 750 1228 720 1152 720C1073 720 999 752 944 808L856 720C912 665 944 590 944 511C944 435 915 362 861 308L655 101C601 46 528 16 451 16C375 16 302 45 248 99L101 245C47 298 16 372 16 448C16 525 45 597 100 652L308 860C362 914 436 944 512 944C591 944 665 912 720 856L808 944C752 999 720 1074 720 1153C720 1229 749 1302 803 1356L1009 1563C1063 1618 1136 1648 1213 1648C1289 1648 1362 1619 1416 1565L1563 1419C1617 1366 1648 1292 1648 1216Z"/></g></svg>
<div class="b" style="left:158.00px;top:246.00px;width:516.00px;height:1.00px;background:#ebebeb"></div>
<span class="t " style="left:208.00px;top:225.00px;font-size:12.000px;line-height:18px;">59338</span>
<span class="t " style="left:298.00px;top:225.00px;font-size:12.000px;line-height:18px;">This month</span>
<svg class="i" style="left:167.90px;top:229.10px;width:12.00px;height:10.80px;" viewBox="0 128 1664 1408" preserveAspectRatio="none"><path fill="#000" stroke="#000" stroke-width="0" d="M512 1376C512 1394 498 1408 480 1408H160C142 1408 128 1394 128 1376V1184C128 1166 142 1152 160 1152H480C498 1152 512 1166 512 1184V1376ZM512 992C512 1010 498 1024 480 1024H160C142 1024 128 1010 128 992V800C128 782 142 768 160 768H480C498 768 512 782 512 800V992ZM1024 1376C1024 1394 1010 1408 992 1408H672C654 1408 640 1394 640 1376V1184C640 1166 654 1152 672 1152H992C1010 1152 1024 1166 1024 1184V1376ZM512 608C512 626 498 640 480 640H160C142 640 128 626 128 608V416C128 398 142 384 160 384H480C498 384 512 398 512 416V608ZM1024 992C1024 1010 1010 1024 992 1024H672C654 1024 640 1010 640 992V800C640 782 654 768 672 768H992C1010 768 1024 782 1024 800V992ZM1536 1376C1536 1394 1522 1408 1504 1408H1184C1166 1408 1152 1394 1152 1376V1184C1152 1166 1166 1152 1184 1152H1504C1522 1152 1536 1166 1536 1184V1376ZM1024 608C1024 626 1010 640 992 640H672C654 640 640 626 640 608V416C640 398 654 384 672 384H992C1010 384 1024 398 1024 416V608ZM1536 992C1536 1010 1522 1024 1504 1024H1184C1166 1024 1152 1010 1152 992V800C1152 782 1166 768 1184 768H1504C1522 768 1536 782 1536 800V992ZM1536 608C1536 626 1522 640 1504 640H1184C1166 640 1152 626 1152 608V416C1152 398 1166 384 1184 384H1504C1522 384 1536 398 1536 416V608ZM1664 288C1664 200 1592 128 1504 128H160C72 128 0 200 0 288V1376C0 1464 72 1536 160 1536H1504C1592 1536 1664 1464 1664 1376Z"/></svg>
<svg class="i" style="left:174.00px;top:233.60px;width:10.20px;height:9.30px" viewBox="16 16 1632 1632"><g><path fill="#fff" stroke="#fff" stroke-width="420" stroke-linejoin="round" d="M1456 1216C1456 1241 1446 1265 1428 1283L1281 1429C1263 1446 1238 1455 1213 1455C1188 1455 1163 1446 1145 1428L939 1221C921 1203 911 1178 911 1153C911 1123 923 1100 944 1080C977 1113 1005 1152 1056 1152C1109 1152 1152 1109 1152 1056C1152 1005 1113 977 1080 944C1100 923 1123 912 1152 912C1177 912 1202 922 1220 940L1428 1148C1446 1166 1456 1190 1456 1216ZM753 511C753 541 741 564 720 584C687 551 659 512 608 512C555 512 512 555 512 608C512 659 551 687 584 720C564 741 541 751 512 751C487 751 462 742 444 724L236 516C218 498 208 474 208 448C208 423 218 399 236 381L383 235C401 218 426 208 451 208C476 208 501 218 519 236L725 443C743 461 753 486 753 511ZM1648 1216C1648 1139 1619 1067 1564 1012L1356 804C1302 750 1228 720 1152 720C1073 720 999 752 944 808L856 720C912 665 944 590 944 511C944 435 915 362 861 308L655 101C601 46 528 16 451 16C375 16 302 45 248 99L101 245C47 298 16 372 16 448C16 525 45 597 100 652L308 860C362 914 436 944 512 944C591 944 665 912 720 856L808 944C752 999 720 1074 720 1153C720 1229 749 1302 803 1356L1009 1563C1063 1618 1136 1648 1213 1648C1289 1648 1362 1619 1416 1565L1563 1419C1617 1366 1648 1292 1648 1216Z"/><path fill="#6b6f9b" d="M1456 1216C1456 1241 1446 1265 1428 1283L1281 1429C1263 1446 1238 1455 1213 1455C1188 1455 1163 1446 1145 1428L939 1221C921 1203 911 1178 911 1153C911 1123 923 1100 944 1080C977 1113 1005 1152 1056 1152C1109 1152 1152 1109 1152 1056C1152 1005 1113 977 1080 944C1100 923 1123 912 1152 912C1177 912 1202 922 1220 940L1428 1148C1446 1166 1456 1190 1456 1216ZM753 511C753 541 741 564 720 584C687 551 659 512 608 512C555 512 512 555 512 608C512 659 551 687 584 720C564 741 541 751 512 751C487 751 462 742 444 724L236 516C218 498 208 474 208 448C208 423 218 399 236 381L383 235C401 218 426 208 451 208C476 208 501 218 519 236L725 443C743 461 753 486 753 511ZM1648 1216C1648 1139 1619 1067 1564 1012L1356 804C1302 750 1228 720 1152 720C1073 720 999 752 944 808L856 720C912 665 944 590 944 511C944 435 915 362 861 308L655 101C601 46 528 16 451 16C375 16 302 45 248 99L101 245C47 298 16 372 16 448C16 525 45 597 100 652L308 860C362 914 436 944 512 944C591 944 665 912 720 856L808 944C752 999 720 1074 720 1153C720 1229 749 1302 803 1356L1009 1563C1063 1618 1136 1648 1213 1648C1289 1648 1362 1619 1416 1565L1563 1419C1617 1366 1648 1292 1648 1216Z"/></g></svg>
<div class="b" style="left:158.00px;top:272.00px;width:516.00px;height:1.00px;background:#ebebeb"></div>
<span class="t " style="left:208.00px;top:251.00px;font-size:12.000px;line-height:18px;">58117</span>
<span class="t " style="left:298.00px;top:251.00px;font-size:12.000px;line-height:18px;">Annual sales</span>
<svg class="i" style="left:168.90px;top:254.10px;width:10.20px;height:12.00px;" viewBox="0 0 1536 1792" preserveAspectRatio="none"><path fill="#000" stroke="#000" stroke-width="0" d="M1468 380 1156 68C1119 31 1045 0 992 0H96C43 0 0 43 0 96V1696C0 1749 43 1792 96 1792H1440C1493 1792 1536 1749 1536 1696V544C1536 491 1505 417 1468 380ZM1024 136C1041 142 1058 151 1065 158L1378 471C1385 478 1394 495 1400 512H1024ZM1408 1664H128V128H896V544C896 597 939 640 992 640H1408ZM1280 1216 960 896 576 1280 448 1152 256 1344V1536H1280ZM448 1024C554 1024 640 938 640 832C640 726 554 640 448 640C342 640 256 726 256 832C256 938 342 1024 448 1024Z"/></svg>
<svg class="i" style="left:174.00px;top:259.60px;width:10.20px;height:9.30px" viewBox="16 16 1632 1632"><g><path fill="#fff" stroke="#fff" stroke-width="420" stroke-linejoin="round" d="M1456 1216C1456 1241 1446 1265 1428 1283L1281 1429C1263 1446 1238 1455 1213 1455C1188 1455 1163 1446 1145 1428L939 1221C921 1203 911 1178 911 1153C911 1123 923 1100 944 1080C977 1113 1005 1152 1056 1152C1109 1152 1152 1109 1152 1056C1152 1005 1113 977 1080 944C1100 923 1123 912 1152 912C1177 912 1202 922 1220 940L1428 1148C1446 1166 1456 1190 1456 1216ZM753 511C753 541 741 564 720 584C687 551 659 512 608 512C555 512 512 555 512 608C512 659 551 687 584 720C564 741 541 751 512 751C487 751 462 742 444 724L236 516C218 498 208 474 208 448C208 423 218 399 236 381L383 235C401 218 426 208 451 208C476 208 501 218 519 236L725 443C743 461 753 486 753 511ZM1648 1216C1648 1139 1619 1067 1564 1012L1356 804C1302 750 1228 720 1152 720C1073 720 999 752 944 808L856 720C912 665 944 590 944 511C944 435 915 362 861 308L655 101C601 46 528 16 451 16C375 16 302 45 248 99L101 245C47 298 16 372 16 448C16 525 45 597 100 652L308 860C362 914 436 944 512 944C591 944 665 912 720 856L808 944C752 999 720 1074 720 1153C720 1229 749 1302 803 1356L1009 1563C1063 1618 1136 1648 1213 1648C1289 1648 1362 1619 1416 1565L1563 1419C1617 1366 1648 1292 1648 1216Z"/><path fill="#6b6f9b" d="M1456 1216C1456 1241 1446 1265 1428 1283L1281 1429C1263 1446 1238 1455 1213 1455C1188 1455 1163 1446 1145 1428L939 1221C921 1203 911 1178 911 1153C911 1123 923 1100 944 1080C977 1113 1005 1152 1056 1152C1109 1152 1152 1109 1152 1056C1152 1005 1113 977 1080 944C1100 923 1123 912 1152 912C1177 912 1202 922 1220 940L1428 1148C1446 1166 1456 1190 1456 1216ZM753 511C753 541 741 564 720 584C687 551 659 512 608 512C555 512 512 555 512 608C512 659 551 687 584 720C564 741 541 751 512 751C487 751 462 742 444 724L236 516C218 498 208 474 208 448C208 423 218 399 236 381L383 235C401 218 426 208 451 208C476 208 501 218 519 236L725 443C743 461 753 486 753 511ZM1648 1216C1648 1139 1619 1067 1564 1012L1356 804C1302 750 1228 720 1152 720C1073 720 999 752 944 808L856 720C912 665 944 590 944 511C944 435 915 362 861 308L655 101C601 46 528 16 451 16C375 16 302 45 248 99L101 245C47 298 16 372 16 448C16 525 45 597 100 652L308 860C362 914 436 944 512 944C591 944 665 912 720 856L808 944C752 999 720 1074 720 1153C720 1229 749 1302 803 1356L1009 1563C1063 1618 1136 1648 1213 1648C1289 1648 1362 1619 1416 1565L1563 1419C1617 1366 1648 1292 1648 1216Z"/></g></svg>
<div class="b" style="left:158.00px;top:298.00px;width:516.00px;height:1.00px;background:#ebebeb"></div>
<span class="t " style="left:208.00px;top:277.00px;font-size:12.000px;line-height:18px;">57987</span>
<span class="t " style="left:298.00px;top:277.00px;font-size:12.000px;line-height:18px;">SalesInvoice</span>
<svg class="i" style="left:168.90px;top:280.10px;width:10.20px;height:12.00px;" viewBox="0 0 1536 1792" preserveAspectRatio="none"><path fill="#000" stroke="#000" stroke-width="0" d="M1468 380 1156 68C1119 31 1045 0 992 0H96C43 0 0 43 0 96V1696C0 1749 43 1792 96 1792H1440C1493 1792 1536 1749 1536 1696V544C1536 491 1505 417 1468 380ZM1024 136C1041 142 1058 151 1065 158L1378 471C1385 478 1394 495 1400 512H1024ZM1408 1664H128V128H896V544C896 597 939 640 992 640H1408ZM1280 1216 960 896 576 1280 448 1152 256 1344V1536H1280ZM448 1024C554 1024 640 938 640 832C640 726 554 640 448 640C342 640 256 726 256 832C256 938 342 1024 448 1024Z"/></svg>
<svg class="i" style="left:174.00px;top:285.60px;width:10.20px;height:9.30px" viewBox="16 16 1632 1632"><g><path fill="#fff" stroke="#fff" stroke-width="420" stroke-linejoin="round" d="M1456 1216C1456 1241 1446 1265 1428 1283L1281 1429C1263 1446 1238 1455 1213 1455C1188 1455 1163 1446 1145 1428L939 1221C921 1203 911 1178 911 1153C911 1123 923 1100 944 1080C977 1113 1005 1152 1056 1152C1109 1152 1152 1109 1152 1056C1152 1005 1113 977 1080 944C1100 923 1123 912 1152 912C1177 912 1202 922 1220 940L1428 1148C1446 1166 1456 1190 1456 1216ZM753 511C753 541 741 564 720 584C687 551 659 512 608 512C555 512 512 555 512 608C512 659 551 687 584 720C564 741 541 751 512 751C487 751 462 742 444 724L236 516C218 498 208 474 208 448C208 423 218 399 236 381L383 235C401 218 426 208 451 208C476 208 501 218 519 236L725 443C743 461 753 486 753 511ZM1648 1216C1648 1139 1619 1067 1564 1012L1356 804C1302 750 1228 720 1152 720C1073 720 999 752 944 808L856 720C912 665 944 590 944 511C944 435 915 362 861 308L655 101C601 46 528 16 451 16C375 16 302 45 248 99L101 245C47 298 16 372 16 448C16 525 45 597 100 652L308 860C362 914 436 944 512 944C591 944 665 912 720 856L808 944C752 999 720 1074 720 1153C720 1229 749 1302 803 1356L1009 1563C1063 1618 1136 1648 1213 1648C1289 1648 1362 1619 1416 1565L1563 1419C1617 1366 1648 1292 1648 1216Z"/><path fill="#6b6f9b" d="M1456 1216C1456 1241 1446 1265 1428 1283L1281 1429C1263 1446 1238 1455 1213 1455C1188 1455 1163 1446 1145 1428L939 1221C921 1203 911 1178 911 1153C911 1123 923 1100 944 1080C977 1113 1005 1152 1056 1152C1109 1152 1152 1109 1152 1056C1152 1005 1113 977 1080 944C1100 923 1123 912 1152 912C1177 912 1202 922 1220 940L1428 1148C1446 1166 1456 1190 1456 1216ZM753 511C753 541 741 564 720 584C687 551 659 512 608 512C555 512 512 555 512 608C512 659 551 687 584 720C564 741 541 751 512 751C487 751 462 742 444 724L236 516C218 498 208 474 208 448C208 423 218 399 236 381L383 235C401 218 426 208 451 208C476 208 501 218 519 236L725 443C743 461 753 486 753 511ZM1648 1216C1648 1139 1619 1067 1564 1012L1356 804C1302 750 1228 720 1152 720C1073 720 999 752 944 808L856 720C912 665 944 590 944 511C944 435 915 362 861 308L655 101C601 46 528 16 451 16C375 16 302 45 248 99L101 245C47 298 16 372 16 448C16 525 45 597 100 652L308 860C362 914 436 944 512 944C591 944 665 912 720 856L808 944C752 999 720 1074 720 1153C720 1229 749 1302 803 1356L1009 1563C1063 1618 1136 1648 1213 1648C1289 1648 1362 1619 1416 1565L1563 1419C1617 1366 1648 1292 1648 1216Z"/></g></svg>
<div class="b" style="left:674.00px;top:139.00px;width:1.00px;height:591.00px;background:#e6e6e6"></div>
<div class="b" style="left:675.00px;top:140.00px;width:648.00px;height:590.00px;background:#fff"></div>
<div class="c" id="det" style="left:675px;top:139px;width:633px;height:544px">
<div class="b" style="left:460.00px;top:58.00px;width:35.00px;height:36.00px;background:#000"></div>
<div class="b" style="left:473.50px;top:75.30px;width:39.90px;height:31.70px;background:#0ca2ce"></div>
<span class="t" id="rs" style="left:478.8px;top:77.3px;font-size:29px;line-height:30px;color:#fff;-webkit-text-stroke:.9px #fff;transform-origin:0 50%;transform:scaleX(.73)">RS</span>
<span class="t" id="dlogo1" style="left:516.3px;top:59.6px;font-size:28px;line-height:36px;font-weight:bold;transform-origin:0 50%;transform:scaleX(.96)">Report</span>
<span class="t" id="dlogo2" style="left:602.5px;top:60.6px;font-size:27px;line-height:36px;font-weight:200;font-family:'DejaVu Sans Light','DejaVu Sans',sans-serif;-webkit-text-stroke:.45px #000;transform-origin:0 50%;transform:scaleX(.82)">Server</span>
<span class="t " style="left:516.30px;top:91.80px;font-size:12.800px;line-height:19px;font-style:italic;color:#444">Simply Business Intelligence</span>
<span class="t " style="right:0.00px;top:113.70px;font-size:10.667px;line-height:16px;">0</span>
<div class="b" style="left:5.00px;top:133.00px;width:628.00px;height:5.00px;background:#3e3f5a"></div>
<div class="b" style="left:517.00px;top:143.00px;width:1.00px;height:47.50px;background:#000"></div>
<span class="t " style="left:523.50px;top:141.20px;font-size:10.667px;line-height:16px;">Created:</span>
<span class="t " style="right:0.00px;top:141.20px;font-size:10.667px;line-height:16px;">2</span>
<span class="t " style="left:523.50px;top:153.20px;font-size:10.667px;line-height:16px;">Last changed:</span>
<span class="t " style="right:0.00px;top:153.20px;font-size:10.667px;line-height:16px;">1</span>
<span class="t " style="left:523.50px;top:165.20px;font-size:10.667px;line-height:16px;">Creator:</span>
<span class="t " style="left:523.50px;top:177.20px;font-size:10.667px;line-height:16px;">Id:</span>
<div class="b" style="left:5.00px;top:245.00px;width:628.00px;height:1.00px;background:#000"></div>
<span class="t" style="right:205.0px;top:249.0px;font-size:10.667px;line-height:16px">b5c4c7a2-61d4-4c79-8339-8061cfef9ef6</span>
<span class="t" style="right:240.5px;top:261.0px;font-size:10.667px;line-height:16px">Demo Data Basis (59483)</span>
<div class="b" style="left:5.00px;top:353.00px;width:628.00px;height:1.00px;background:#000"></div>
<span class="t " style="left:8.00px;top:360.00px;font-size:10.667px;line-height:16px;font-weight:bold">OD_ORDERNUMBER</span>
<span class="t " style="left:8.00px;top:372.00px;font-size:10.667px;line-height:16px;">Order Number</span>
<span class="t" style="left:165.5px;top:360.5px;font-size:10px;line-height:16px"><b>Hidden:</b> no</span>
<div class="b" style="left:245.00px;top:362.00px;width:1.00px;height:12.00px;background:#000"></div>
<span class="t" style="left:252.2px;top:360.5px;font-size:10px;line-height:16px"><b>Order:</b> ascending</span>
<div class="b" style="left:368.00px;top:362.00px;width:1.00px;height:12.00px;background:#000"></div>
<span class="t" style="left:373.7px;top:360.5px;font-size:10px;line-height:16px"><b>Empty cells:</b> -</span>
<div class="b" style="left:517.00px;top:362.00px;width:1.00px;height:12.00px;background:#000"></div>
<span class="t" style="left:523.5px;top:360.5px;font-size:10px;line-height:16px"><b>Aggregation:</b> -</span>
<div class="b" style="left:5.00px;top:389.00px;width:628.00px;height:30.00px;background:#cfcfcf"></div>
<span class="t " style="left:8.00px;top:390.00px;font-size:10.667px;line-height:16px;font-weight:bold">OD_ORDERLINENUMBER</span>
<span class="t " style="left:8.00px;top:402.00px;font-size:10.667px;line-height:16px;">Order Line Number</span>
<span class="t" style="left:165.5px;top:390.5px;font-size:10px;line-height:16px"><b>Hidden:</b> no</span>
<div class="b" style="left:245.00px;top:392.00px;width:1.00px;height:12.00px;background:#000"></div>
<span class="t" style="left:252.2px;top:390.5px;font-size:10px;line-height:16px"><b>Order:</b> ascending</span>
<div class="b" style="left:368.00px;top:392.00px;width:1.00px;height:12.00px;background:#000"></div>
<span class="t" style="left:373.7px;top:390.5px;font-size:10px;line-height:16px"><b>Empty cells:</b> -</span>
<div class="b" style="left:517.00px;top:392.00px;width:1.00px;height:12.00px;background:#000"></div>
<span class="t" style="left:523.5px;top:390.5px;font-size:10px;line-height:16px"><b>Aggregation:</b> -</span>
<span class="t " style="left:8.00px;top:420.00px;font-size:10.667px;line-height:16px;font-weight:bold">OD_PRODUCTCODE</span>
<span class="t " style="left:8.00px;top:432.00px;font-size:10.667px;line-height:16px;">Product Code</span>
<span class="t" style="left:165.5px;top:420.5px;font-size:10px;line-height:16px"><b>Hidden:</b> no</span>
<div class="b" style="left:245.00px;top:422.00px;width:1.00px;height:12.00px;background:#000"></div>
<span class="t" style="left:251.0px;top:420.5px;font-size:10px;line-height:16px"><b>Order:</b> -</span>
<div class="b" style="left:368.00px;top:422.00px;width:1.00px;height:12.00px;background:#000"></div>
<span class="t" style="left:373.7px;top:420.5px;font-size:10px;line-height:16px"><b>Empty cells:</b> -</span>
<div class="b" style="left:517.00px;top:422.00px;width:1.00px;height:12.00px;background:#000"></div>
<span class="t" style="left:523.5px;top:420.5px;font-size:10px;line-height:16px"><b>Aggregation:</b> -</span>
<div class="b" style="left:5.00px;top:449.00px;width:628.00px;height:30.00px;background:#cfcfcf"></div>
<span class="t " style="left:8.00px;top:450.00px;font-size:10.667px;line-height:16px;font-weight:bold">OD_QUANTITYORDERED</span>
<span class="t " style="left:8.00px;top:462.00px;font-size:10.667px;line-height:16px;">Quantity</span>
<span class="t" style="left:165.5px;top:450.5px;font-size:10px;line-height:16px"><b>Hidden:</b> no</span>
<div class="b" style="left:245.00px;top:452.00px;width:1.00px;height:12.00px;background:#000"></div>
<span class="t" style="left:251.0px;top:450.5px;font-size:10px;line-height:16px"><b>Order:</b> -</span>
<div class="b" style="left:368.00px;top:452.00px;width:1.00px;height:12.00px;background:#000"></div>
<span class="t" style="left:373.7px;top:450.5px;font-size:10px;line-height:16px"><b>Empty cells:</b> -</span>
<div class="b" style="left:517.00px;top:452.00px;width:1.00px;height:12.00px;background:#000"></div>
<span class="t" style="left:523.5px;top:450.5px;font-size:10px;line-height:16px"><b>Aggregation:</b> -</span>
<span class="t " style="left:8.00px;top:480.00px;font-size:10.667px;line-height:16px;font-weight:bold">OR_ORDERDATE</span>
<span class="t " style="left:8.00px;top:492.00px;font-size:10.667px;line-height:16px;">Date</span>
<span class="t" style="left:165.5px;top:480.5px;font-size:10px;line-height:16px"><b>Hidden:</b> no</span>
<div class="b" style="left:245.00px;top:482.00px;width:1.00px;height:12.00px;background:#000"></div>
<span class="t" style="left:251.0px;top:480.5px;font-size:10px;line-height:16px"><b>Order:</b> -</span>
<div class="b" style="left:368.00px;top:482.00px;width:1.00px;height:12.00px;background:#000"></div>
<span class="t" style="left:373.7px;top:480.5px;font-size:10px;line-height:16px"><b>Empty cells:</b> -</span>
<div class="b" style="left:517.00px;top:482.00px;width:1.00px;height:12.00px;background:#000"></div>
<span class="t" style="left:523.5px;top:480.5px;font-size:10px;line-height:16px"><b>Aggregation:</b> -</span>
<span class="t" style="left:165.5px;top:491.8px;font-size:10px;line-height:16px"><b>Format as</b>: Date. Format: yyyy/MM/dd</span>
<div class="b" style="left:5.00px;top:509.00px;width:628.00px;height:35.00px;background:#cfcfcf"></div>
<span class="t " style="left:8.00px;top:510.00px;font-size:10.667px;line-height:16px;font-weight:bold">OR_STATUS</span>
<span class="t" style="left:165.5px;top:510.5px;font-size:10px;line-height:16px"><b>Hidden:</b> yes</span>
<div class="b" style="left:245.00px;top:512.00px;width:1.00px;height:12.00px;background:#000"></div>
<span class="t" style="left:251.0px;top:510.5px;font-size:10px;line-height:16px"><b>Order:</b> -</span>
<div class="b" style="left:368.00px;top:512.00px;width:1.00px;height:12.00px;background:#000"></div>
<span class="t" style="left:373.7px;top:510.5px;font-size:10px;line-height:16px"><b>Empty cells:</b> -</span>
<div class="b" style="left:517.00px;top:512.00px;width:1.00px;height:12.00px;background:#000"></div>
<span class="t" style="left:523.5px;top:510.5px;font-size:10px;line-height:16px"><b>Aggregation:</b> -</span>
<span class="t" style="left:165.5px;top:521.8px;font-size:10px;line-height:16px"><b>case sensitive filtering</b></span>
</div>
<svg class="i" style="left:1310.5px;top:145.5px;width:10px;height:5.5px" viewBox="0 0 10 5.5"><path d="M5 0L10 5.5H0z" fill="#949494"/></svg>
<div class="b" style="left:1311.00px;top:158.00px;width:9.00px;height:345.00px;background:#8c8c8c;border-radius:4.5px"></div>
<svg class="i" style="left:1310.5px;top:670.8px;width:10px;height:5.5px" viewBox="0 0 10 5.5"><path d="M0 0H10L5 5.5z" fill="#949494"/></svg>
<svg class="i" style="left:680px;top:686px;width:5.5px;height:10px" viewBox="0 0 5.5 10"><path d="M5.5 0V10L0 5z" fill="#949494"/></svg>
<div class="b" style="left:693.00px;top:686.00px;width:556.00px;height:9.00px;background:#8c8c8c;border-radius:4.5px"></div>
<svg class="i" style="left:1297px;top:686px;width:5.5px;height:10px" viewBox="0 0 5.5 10"><path d="M0 0L5.5 5L0 10z" fill="#949494"/></svg>
<div class="b" style="left:675.00px;top:698.00px;width:648.00px;height:1.00px;background:#c8ccd0"></div>
<div class="b" style="left:675.00px;top:699.00px;width:60.00px;height:31.00px;background:#e0e0ea"></div>
<div class="b" style="left:735.00px;top:699.00px;width:1.00px;height:31.00px;background:#8488a6"></div>
<div class="b" style="left:797.00px;top:699.00px;width:1.00px;height:31.00px;background:#8488a6"></div>
<div class="b" style="left:865.00px;top:699.00px;width:1.00px;height:31.00px;background:#8488a6"></div>
<span class="t " style="left:685.00px;top:705.60px;font-size:13.000px;line-height:20px;">Details</span>
<span class="t " style="left:747.00px;top:706.60px;font-size:13.000px;line-height:20px;color:#7b7fa0">History</span>
<span class="t " style="left:809.50px;top:706.60px;font-size:13.000px;line-height:20px;color:#7b7fa0">Preview</span>
<div class="b" style="left:0.00px;top:0.00px;width:1332.00px;height:739.00px;background:rgba(0,0,0,.2)"></div>
<div class="b" id="dlg" style="left:331px;top:169.5px;width:668px;height:399.2px;background:#3e3e5a;border-radius:5px;box-shadow:0 0 5px rgba(0,0,0,.42)"></div>
<div class="b" style="left:336.00px;top:206.00px;width:658.00px;height:358.00px;background:#fff"></div>
<svg class="i" style="left:346.04px;top:182.26px;width:12.62px;height:11.78px;" viewBox="0 0 1920 1792"><path fill="#fff" stroke="#fff" stroke-width="0" d="M593 896C541 821 512 731 512 640C512 618 514 596 517 574C474 589 430 597 384 597C249 597 145 512 124 512C-3 512 0 784 0 865C0 976 94 1024 194 1024H328C395 944 489 899 593 896ZM1664 1533C1664 1307 1611 960 1318 960C1284 960 1160 1099 960 1099C760 1099 636 960 602 960C309 960 256 1307 256 1533C256 1695 363 1792 523 1792H1397C1557 1792 1664 1695 1664 1533ZM640 256C640 115 525 0 384 0C243 0 128 115 128 256C128 397 243 512 384 512C525 512 640 397 640 256ZM1344 640C1344 428 1172 256 960 256C748 256 576 428 576 640C576 852 748 1024 960 1024C1172 1024 1344 852 1344 640ZM1920 865C1920 784 1923 512 1796 512C1775 512 1671 597 1536 597C1490 597 1446 589 1403 574C1406 596 1408 618 1408 640C1408 731 1379 821 1327 896C1431 899 1525 944 1592 1024H1726C1826 1024 1920 976 1920 865ZM1792 256C1792 115 1677 0 1536 0C1395 0 1280 115 1280 256C1280 397 1395 512 1536 512C1677 512 1792 397 1792 256Z"/></svg>
<span class="t " style="left:364.00px;top:177.80px;font-size:13.000px;line-height:20px;color:#fff;font-weight:bold">TeamSpace Accounting (60697) : Preferences</span>
<svg class="i" style="left:978.8px;top:182.8px;width:11.4px;height:11.4px" viewBox="0 0 11.4 11.4"><path d="M.8.8L10.6 10.6M10.6.8L.8 10.6" stroke="#fff" stroke-width="2.1" fill="none"/></svg>
<div class="b" style="left:433.00px;top:206.00px;width:1.00px;height:31.00px;background:#8b8fa8"></div>
<div class="b" style="left:434.00px;top:206.00px;width:93.00px;height:31.00px;background:#e0e0ea"></div>
<div class="b" style="left:527.00px;top:206.00px;width:1.00px;height:31.00px;background:#8b8fa8"></div>
<div class="b" style="left:336.00px;top:237.00px;width:658.00px;height:4.00px;background:#6b6f8f"></div>
<svg class="i" style="left:342.04px;top:217.97px;width:15.92px;height:12.56px;" viewBox="0 128 1784 1408"><path fill="#4a4d6e" stroke="#4a4d6e" stroke-width="0" d="M888 1184H832V1088H736V1032L852 916L1004 1068ZM1328 464C1337 473 1336 488 1327 497L977 847C968 856 953 857 944 848C935 839 936 824 945 815L1295 465C1304 456 1319 455 1328 464ZM1408 1058C1408 1045 1400 1034 1388 1029C1376 1024 1363 1026 1353 1036L1289 1100C1283 1106 1280 1114 1280 1122V1248C1280 1336 1208 1408 1120 1408H288C200 1408 128 1336 128 1248V416C128 328 200 256 288 256H1120C1135 256 1150 258 1165 262C1176 266 1188 263 1197 254L1246 205C1254 197 1257 187 1255 176C1253 166 1246 157 1237 153C1200 136 1160 128 1120 128H288C129 128 0 257 0 416V1248C0 1407 129 1536 288 1536H1120C1279 1536 1408 1407 1408 1248ZM1312 320 640 992V1280H928L1600 608ZM1756 452C1793 415 1793 353 1756 316L1604 164C1567 127 1505 127 1468 164L1376 256L1664 544L1756 452Z"/></svg>
<span class="t " style="left:364.00px;top:213.50px;font-size:13.000px;line-height:20px;color:#7b7fa0">Properties</span>
<svg class="i" style="left:441.12px;top:216.39px;width:15.77px;height:14.72px;" viewBox="0 0 1920 1792"><path fill="#000" stroke="#000" stroke-width="0" d="M593 896C541 821 512 731 512 640C512 618 514 596 517 574C474 589 430 597 384 597C249 597 145 512 124 512C-3 512 0 784 0 865C0 976 94 1024 194 1024H328C395 944 489 899 593 896ZM1664 1533C1664 1307 1611 960 1318 960C1284 960 1160 1099 960 1099C760 1099 636 960 602 960C309 960 256 1307 256 1533C256 1695 363 1792 523 1792H1397C1557 1792 1664 1695 1664 1533ZM640 256C640 115 525 0 384 0C243 0 128 115 128 256C128 397 243 512 384 512C525 512 640 397 640 256ZM1344 640C1344 428 1172 256 960 256C748 256 576 428 576 640C576 852 748 1024 960 1024C1172 1024 1344 852 1344 640ZM1920 865C1920 784 1923 512 1796 512C1775 512 1671 597 1536 597C1490 597 1446 589 1403 574C1406 596 1408 618 1408 640C1408 731 1379 821 1327 896C1431 899 1525 944 1592 1024H1726C1826 1024 1920 976 1920 865ZM1792 256C1792 115 1677 0 1536 0C1395 0 1280 115 1280 256C1280 397 1395 512 1536 512C1677 512 1792 397 1792 256Z"/></svg>
<span class="t " style="left:463.00px;top:213.50px;font-size:13.000px;line-height:20px;">Members</span>
<div class="b" style="left:922.00px;top:247.00px;width:26.00px;height:28.00px;background:#fff;border:1px solid #b5bdc3;box-sizing:border-box"></div>
<div class="b" style="left:954.00px;top:247.00px;width:26.00px;height:28.00px;background:#fff;border:1px solid #b5bdc3;box-sizing:border-box"></div>
<svg class="i" style="left:928.97px;top:256.73px;width:12.07px;height:9.25px;" viewBox="121 334 1550 1188"><path fill="#000" stroke="#000" stroke-width="0" d="M1671 566C1671 541 1661 516 1643 498L1507 362C1489 344 1464 334 1439 334C1414 334 1389 344 1371 362L715 1019L421 724C403 706 378 696 353 696C328 696 303 706 285 724L149 860C131 878 121 903 121 928C121 953 131 978 149 996L511 1358L647 1494C665 1512 690 1522 715 1522C740 1522 765 1512 783 1494L919 1358L1643 634C1661 616 1671 591 1671 566Z"/></svg>
<svg class="i" style="left:960.90px;top:255.10px;width:12.20px;height:12.20px;" viewBox="110 366 1188 1188"><path fill="#000" stroke="#000" stroke-width="0" d="M1298 1322C1298 1297 1288 1272 1270 1254L976 960L1270 666C1288 648 1298 623 1298 598C1298 573 1288 548 1270 530L1134 394C1116 376 1091 366 1066 366C1041 366 1016 376 998 394L704 688L410 394C392 376 367 366 342 366C317 366 292 376 274 394L138 530C120 548 110 573 110 598C110 623 120 648 138 666L432 960L138 1254C120 1272 110 1297 110 1322C110 1347 120 1372 138 1390L274 1526C292 1544 317 1554 342 1554C367 1554 392 1544 410 1526L704 1232L998 1526C1016 1544 1041 1554 1066 1554C1091 1554 1116 1544 1134 1526L1270 1390C1288 1372 1298 1347 1298 1322Z"/></svg>
<div class="b" style="left:336.00px;top:281.00px;width:657.00px;height:38.00px;background:#eeeeee"></div>
<div class="b" style="left:698.00px;top:286.00px;width:98.50px;height:28.00px;background:#fff;border:1px solid #b5bdc3;box-sizing:border-box"></div>
<div class="b" style="left:801.00px;top:286.00px;width:84.50px;height:28.00px;background:#fff;border:1px solid #b5bdc3;box-sizing:border-box"></div>
<div class="b" style="left:897.00px;top:286.00px;width:91.50px;height:28.00px;background:#fff;border:1px solid #b5bdc3;box-sizing:border-box"></div>
<svg class="i" style="left:705.62px;top:294.62px;width:8.97px;height:10.76px;" viewBox="0 128 1280 1536"><path fill="#000" stroke="#000" stroke-width="0" d="M1280 1399C1280 1136 1215 832 953 832C872 911 762 960 640 960C518 960 408 911 327 832C65 832 0 1136 0 1399C0 1545 96 1664 213 1664H1067C1184 1664 1280 1545 1280 1399ZM1024 512C1024 300 852 128 640 128C428 128 256 300 256 512C256 724 428 896 640 896C852 896 1024 724 1024 512Z"/></svg>
<svg class="i" style="left:711.20px;top:299.10px;width:9.70px;height:9.70px" viewBox="0 0 20 20"><circle cx="10" cy="10" r="10" fill="#6b6f8f"/><path d="M8.3 4h3.4v4.3H16v3.4h-4.3V16H8.3v-4.3H4V8.3h4.3z" fill="#fff"/></svg>
<span class="t " style="left:721.00px;top:291.00px;font-size:12.000px;line-height:18px;">Add member</span>
<svg class="i" style="left:808.27px;top:295.03px;width:10.86px;height:10.13px;" viewBox="0 0 1920 1792"><path fill="#000" stroke="#000" stroke-width="0" d="M593 896C541 821 512 731 512 640C512 618 514 596 517 574C474 589 430 597 384 597C249 597 145 512 124 512C-3 512 0 784 0 865C0 976 94 1024 194 1024H328C395 944 489 899 593 896ZM1664 1533C1664 1307 1611 960 1318 960C1284 960 1160 1099 960 1099C760 1099 636 960 602 960C309 960 256 1307 256 1533C256 1695 363 1792 523 1792H1397C1557 1792 1664 1695 1664 1533ZM640 256C640 115 525 0 384 0C243 0 128 115 128 256C128 397 243 512 384 512C525 512 640 397 640 256ZM1344 640C1344 428 1172 256 960 256C748 256 576 428 576 640C576 852 748 1024 960 1024C1172 1024 1344 852 1344 640ZM1920 865C1920 784 1923 512 1796 512C1775 512 1671 597 1536 597C1490 597 1446 589 1403 574C1406 596 1408 618 1408 640C1408 731 1379 821 1327 896C1431 899 1525 944 1592 1024H1726C1826 1024 1920 976 1920 865ZM1792 256C1792 115 1677 0 1536 0C1395 0 1280 115 1280 256C1280 397 1395 512 1536 512C1677 512 1792 397 1792 256Z"/></svg>
<svg class="i" style="left:814.10px;top:299.10px;width:9.70px;height:9.70px" viewBox="0 0 20 20"><circle cx="10" cy="10" r="10" fill="#6b6f8f"/><path d="M8.3 4h3.4v4.3H16v3.4h-4.3V16H8.3v-4.3H4V8.3h4.3z" fill="#fff"/></svg>
<span class="t " style="left:824.00px;top:291.00px;font-size:12.000px;line-height:18px;">Add group</span>
<div class="b" style="left:891.00px;top:291.00px;width:1.00px;height:17.50px;background:#dcdce8"></div>
<svg class="i" style="left:903.73px;top:293.88px;width:11.85px;height:11.85px;" viewBox="0 128 1536 1536"><path fill="#000" stroke="#000" stroke-width="0" d="M1216 960C1216 995 1187 1024 1152 1024H384C349 1024 320 995 320 960V832C320 797 349 768 384 768H1152C1187 768 1216 797 1216 832V960ZM1536 896C1536 472 1192 128 768 128C344 128 0 472 0 896C0 1320 344 1664 768 1664C1192 1664 1536 1320 1536 896Z"/></svg>
<span class="t " style="left:920.00px;top:291.00px;font-size:12.000px;line-height:18px;">Remove</span>
<div class="b" style="left:968.00px;top:294.50px;width:1.00px;height:11.00px;background:#3e3e5a"></div>
<svg class="i" style="left:971.99px;top:298.85px;width:10.12px;height:6.50px;" viewBox="90 533 1612 1034"><path fill="#000" stroke="#000" stroke-width="0" d="M1683 808C1708 783 1708 742 1683 717L1517 552C1492 527 1452 527 1427 552L896 1083L365 552C340 527 300 527 275 552L109 717C84 742 84 783 109 808L851 1549C876 1574 916 1574 941 1549L1683 808Z"/></svg>
<div class="b" style="left:336.00px;top:319.00px;width:658.00px;height:31.00px;background:#eeeeee;border-top:1px solid #b9c2c8;border-bottom:1px solid #b9c2c8;box-sizing:border-box"></div>
<div class="b" style="left:375.00px;top:320.00px;width:1.00px;height:29.00px;background:#b9c2c8"></div>
<div class="b" style="left:536.00px;top:320.00px;width:1.00px;height:29.00px;background:#b9c2c8"></div>
<div class="b" style="left:616.00px;top:320.00px;width:1.00px;height:29.00px;background:#b9c2c8"></div>
<div class="b" style="left:696.00px;top:320.00px;width:1.00px;height:29.00px;background:#b9c2c8"></div>
<div class="b" style="left:776.00px;top:320.00px;width:1.00px;height:29.00px;background:#b9c2c8"></div>
<span class="t " style="left:386.00px;top:325.00px;font-size:12.000px;line-height:18px;color:#777;font-weight:bold">Name</span>
<span class="t " style="left:547.00px;top:325.00px;font-size:12.000px;line-height:18px;color:#777;font-weight:bold">First na…</span>
<span class="t " style="left:627.00px;top:325.00px;font-size:12.000px;line-height:18px;color:#777;font-weight:bold">Last na…</span>
<span class="t " style="left:707.00px;top:325.00px;font-size:12.000px;line-height:18px;color:#777;font-weight:bold">Role</span>
<div class="b" style="left:336.00px;top:375.00px;width:441.00px;height:1.00px;background:#e6e6e6"></div>
<span class="t " style="left:386.00px;top:354.00px;font-size:12.000px;line-height:18px;">root, root</span>
<span class="t " style="left:547.00px;top:354.00px;font-size:12.000px;line-height:18px;">root</span>
<span class="t " style="left:627.00px;top:354.00px;font-size:12.000px;line-height:18px;">root</span>
<span class="t " style="left:707.00px;top:354.00px;font-size:12.000px;line-height:18px;">Admin</span>
<div class="b" style="left:336.00px;top:401.00px;width:441.00px;height:1.00px;background:#e6e6e6"></div>
<span class="t " style="left:386.00px;top:380.00px;font-size:12.000px;line-height:18px;">Urswick, Christopher</span>
<span class="t " style="left:547.00px;top:380.00px;font-size:12.000px;line-height:18px;">Christop…</span>
<span class="t " style="left:627.00px;top:380.00px;font-size:12.000px;line-height:18px;">Urswick</span>
<span class="t " style="left:707.00px;top:380.00px;font-size:12.000px;line-height:18px;">Guest</span>
<div class="b" style="left:336.00px;top:427.00px;width:441.00px;height:1.00px;background:#e6e6e6"></div>
<span class="t " style="left:386.00px;top:406.00px;font-size:12.000px;line-height:18px;">DeBoys, Jaques</span>
<span class="t " style="left:547.00px;top:406.00px;font-size:12.000px;line-height:18px;">Jaques</span>
<span class="t " style="left:627.00px;top:406.00px;font-size:12.000px;line-height:18px;">DeBoys</span>
<span class="t " style="left:707.00px;top:406.00px;font-size:12.000px;line-height:18px;">Guest</span>
<div class="b" style="left:336.00px;top:453.00px;width:441.00px;height:1.00px;background:#e6e6e6"></div>
<span class="t " style="left:386.00px;top:432.00px;font-size:12.000px;line-height:18px;">Gower, John</span>
<span class="t " style="left:547.00px;top:432.00px;font-size:12.000px;line-height:18px;">John</span>
<span class="t " style="left:627.00px;top:432.00px;font-size:12.000px;line-height:18px;">Gower</span>
<span class="t " style="left:707.00px;top:432.00px;font-size:12.000px;line-height:18px;">Guest</span>
<div class="b" style="left:336.00px;top:479.00px;width:441.00px;height:1.00px;background:#e6e6e6"></div>
<span class="t " style="left:386.00px;top:458.00px;font-size:12.000px;line-height:18px;">Admin, Demo</span>
<span class="t " style="left:547.00px;top:458.00px;font-size:12.000px;line-height:18px;">Demo</span>
<span class="t " style="left:627.00px;top:458.00px;font-size:12.000px;line-height:18px;">Admin</span>
<span class="t " style="left:707.00px;top:458.00px;font-size:12.000px;line-height:18px;">Guest</span>
<div class="b" style="left:336.00px;top:505.00px;width:441.00px;height:1.00px;background:#e6e6e6"></div>
<span class="t " style="left:386.00px;top:484.00px;font-size:12.000px;line-height:18px;">Agrippa, Menenius</span>
<span class="t " style="left:547.00px;top:484.00px;font-size:12.000px;line-height:18px;">Menenius</span>
<span class="t " style="left:627.00px;top:484.00px;font-size:12.000px;line-height:18px;">Agrippa</span>
<span class="t " style="left:707.00px;top:484.00px;font-size:12.000px;line-height:18px;">Guest</span>
<div class="b" style="left:336.00px;top:531.00px;width:441.00px;height:1.00px;background:#e6e6e6"></div>
<span class="t " style="left:386.00px;top:510.00px;font-size:12.000px;line-height:18px;">Antony, Marc</span>
<span class="t " style="left:547.00px;top:510.00px;font-size:12.000px;line-height:18px;">Marc</span>
<span class="t " style="left:627.00px;top:510.00px;font-size:12.000px;line-height:18px;">Antony</span>
<span class="t " style="left:707.00px;top:510.00px;font-size:12.000px;line-height:18px;">Guest</span>
<div class="b" style="left:336.00px;top:557.00px;width:441.00px;height:1.00px;background:#e6e6e6"></div>
<span class="t " style="left:386.00px;top:536.00px;font-size:12.000px;line-height:18px;">Bates, John</span>
<span class="t " style="left:547.00px;top:536.00px;font-size:12.000px;line-height:18px;">John</span>
<span class="t " style="left:627.00px;top:536.00px;font-size:12.000px;line-height:18px;">Bates</span>
<span class="t " style="left:707.00px;top:536.00px;font-size:12.000px;line-height:18px;">Guest</span>
<svg class="i" style="left:347.11px;top:357.47px;width:10.88px;height:11.86px;" viewBox="0 128 1408 1536"><path fill="#000" stroke="#000" stroke-width="0" d="M384 1344C384 1309 355 1280 320 1280C285 1280 256 1309 256 1344C256 1379 285 1408 320 1408C355 1408 384 1379 384 1344ZM1408 1405C1408 1206 1368 892 1130 840C1159 908 1152 986 1152 1059C1231 1104 1280 1189 1280 1280V1369C1300 1387 1312 1413 1312 1440C1312 1493 1269 1536 1216 1536C1163 1536 1120 1493 1120 1440C1120 1413 1132 1387 1152 1369V1280C1152 1210 1094 1152 1024 1152C954 1152 896 1210 896 1280V1369C916 1387 928 1413 928 1440C928 1493 885 1536 832 1536C779 1536 736 1493 736 1440C736 1413 748 1387 768 1369V1280C768 1139 883 1024 1024 1024V960C1024 927 1021 894 999 867C915 933 811 971 704 971C597 971 493 933 409 867C387 894 384 927 384 960V1163C460 1190 512 1263 512 1344C512 1450 426 1536 320 1536C214 1536 128 1450 128 1344C128 1263 179 1190 256 1163V960C256 919 262 878 278 840C40 892 0 1206 0 1405C0 1568 107 1664 267 1664H1141C1301 1664 1408 1568 1408 1405ZM1088 512C1088 300 916 128 704 128C492 128 320 300 320 512C320 724 492 896 704 896C916 896 1088 724 1088 512Z"/></svg>
</div>
</body></html>
